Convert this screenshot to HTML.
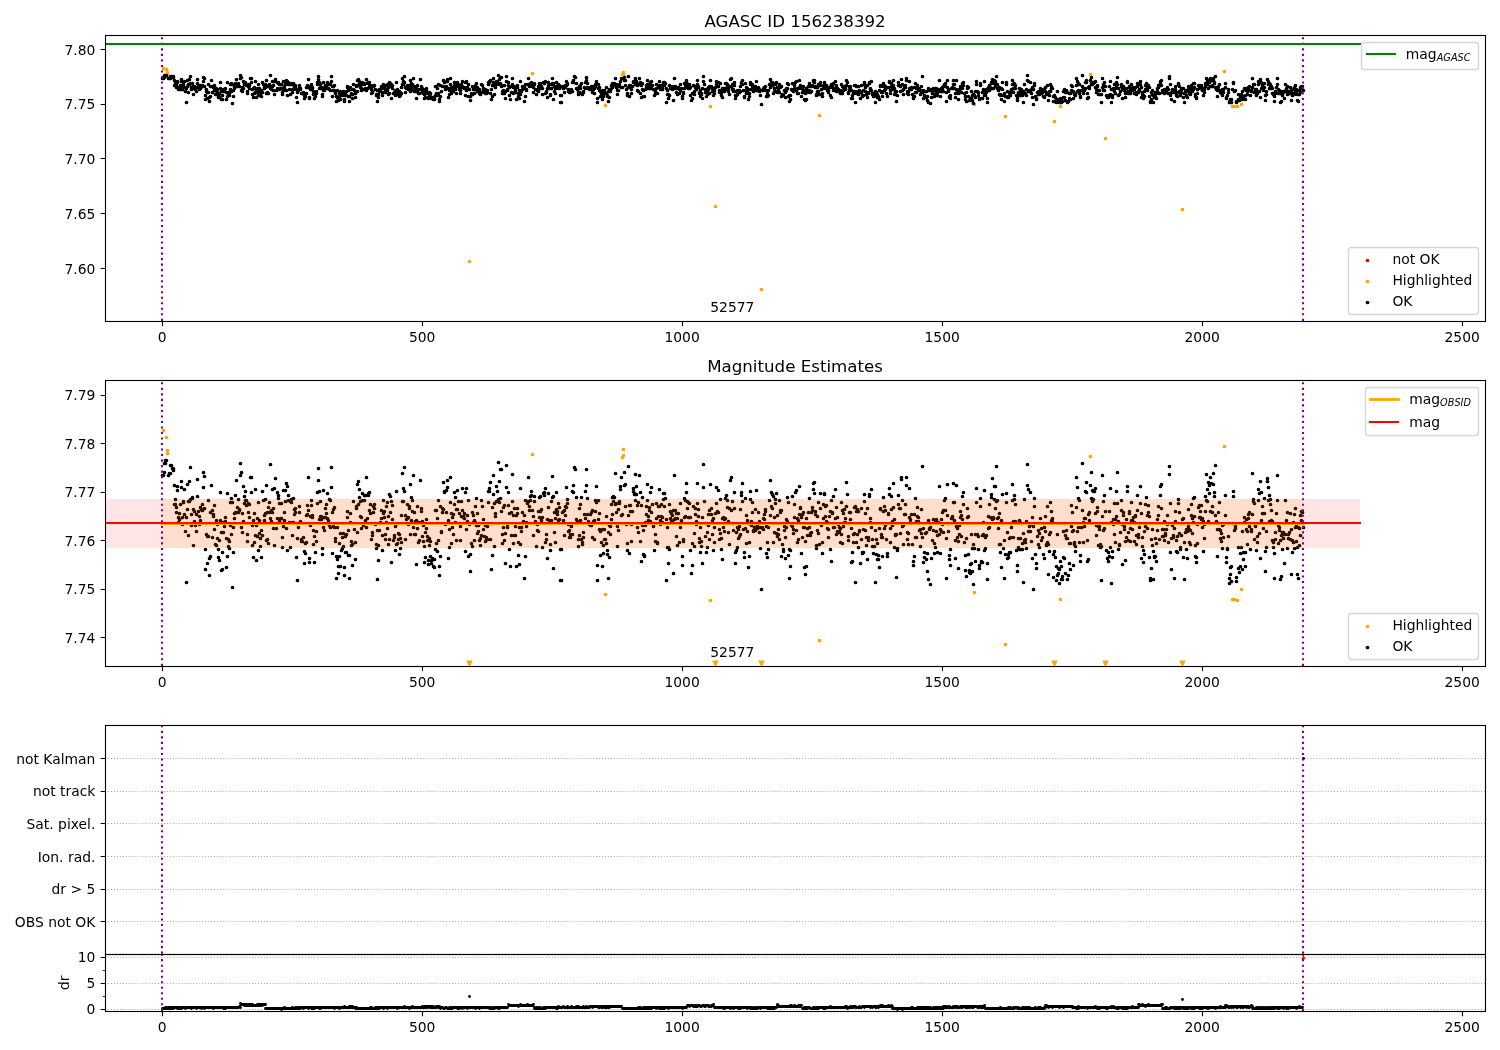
<!DOCTYPE html>
<html><head><meta charset="utf-8"><title>AGASC ID 156238392</title>
<style>
html,body{margin:0;padding:0;background:#fff}
svg{display:block;will-change:transform}
text{font-family:"DejaVu Sans","Liberation Sans",sans-serif;fill:#000}
.t10{font-size:13.89px}
.t12{font-size:16.67px}
.sub{font-size:9.72px;font-style:oblique}
</style></head><body>
<svg width="1500" height="1050" viewBox="0 0 1500 1050">
<rect width="1500" height="1050" fill="#fff"/>
<clipPath id="c1"><rect x="105.1" y="35.33" width="1379.9" height="285.95"/></clipPath>
<g clip-path="url(#c1)">
<path d="M163.5 68.5h0M166.5 69.5h0M167.5 72.5h0M167.5 73.5h0M469.5 261.5h0M532.5 73.5h0M605.5 105.5h0M622.5 74.5h0M623.5 72.5h0M623.5 74.5h0M710.5 106.5h0M715.5 206.5h0M761.5 289.5h0M819.5 115.5h0M974.5 104.5h0M1005.5 116.5h0M1054.5 121.5h0M1060.5 106.5h0M1090.5 74.5h0M1105.5 138.5h0M1182.5 209.5h0M1224.5 71.5h0M1232.5 106.5h0M1234.5 106.5h0M1237.5 106.5h0M1241.5 104.5h0" fill="none" stroke="#ffa500" stroke-width="3.7" stroke-linecap="round"/>
<path d="M162.5 78.5h0M163.5 78.5h0M164.5 77.5h0M164.5 75.5h0M165.5 75.5h0M165.5 75.5h0M166.5 75.5h0M168.5 78.5h0M168.5 78.5h0M169.5 78.5h0M169.5 78.5h0M170.5 78.5h0M170.5 76.5h0M171.5 76.5h0M171.5 76.5h0M172.5 76.5h0M173.5 77.5h0M173.5 76.5h0M174.5 80.5h0M174.5 85.5h0M175.5 83.5h0M175.5 85.5h0M176.5 85.5h0M176.5 87.5h0M177.5 82.5h0M177.5 81.5h0M178.5 88.5h0M178.5 89.5h0M179.5 88.5h0M179.5 87.5h0M180.5 89.5h0M180.5 85.5h0M181.5 79.5h0M181.5 81.5h0M182.5 87.5h0M182.5 89.5h0M183.5 84.5h0M183.5 84.5h0M184.5 81.5h0M184.5 87.5h0M185.5 91.5h0M186.5 88.5h0M186.5 102.5h0M187.5 80.5h0M187.5 86.5h0M188.5 92.5h0M188.5 84.5h0M189.5 79.5h0M189.5 84.5h0M190.5 76.5h0M190.5 83.5h0M191.5 89.5h0M191.5 87.5h0M192.5 83.5h0M192.5 83.5h0M193.5 86.5h0M193.5 94.5h0M194.5 88.5h0M194.5 86.5h0M195.5 89.5h0M195.5 89.5h0M196.5 87.5h0M196.5 91.5h0M197.5 83.5h0M197.5 79.5h0M198.5 86.5h0M199.5 87.5h0M199.5 89.5h0M200.5 85.5h0M200.5 88.5h0M201.5 86.5h0M201.5 86.5h0M202.5 85.5h0M202.5 86.5h0M203.5 81.5h0M203.5 77.5h0M204.5 78.5h0M204.5 86.5h0M205.5 99.5h0M205.5 95.5h0M206.5 91.5h0M206.5 89.5h0M207.5 98.5h0M207.5 92.5h0M208.5 84.5h0M208.5 92.5h0M209.5 101.5h0M209.5 97.5h0M210.5 96.5h0M210.5 86.5h0M211.5 80.5h0M212.5 86.5h0M212.5 92.5h0M213.5 87.5h0M213.5 87.5h0M214.5 85.5h0M214.5 90.5h0M215.5 94.5h0M215.5 94.5h0M216.5 94.5h0M216.5 88.5h0M217.5 89.5h0M217.5 92.5h0M218.5 97.5h0M218.5 95.5h0M219.5 97.5h0M219.5 93.5h0M220.5 88.5h0M220.5 82.5h0M221.5 91.5h0M221.5 99.5h0M222.5 99.5h0M222.5 95.5h0M223.5 91.5h0M223.5 89.5h0M224.5 90.5h0M225.5 88.5h0M225.5 88.5h0M226.5 92.5h0M226.5 99.5h0M227.5 96.5h0M227.5 82.5h0M228.5 94.5h0M228.5 92.5h0M229.5 93.5h0M229.5 95.5h0M230.5 84.5h0M230.5 89.5h0M231.5 91.5h0M231.5 83.5h0M232.5 103.5h0M232.5 84.5h0M233.5 96.5h0M233.5 90.5h0M234.5 87.5h0M234.5 88.5h0M235.5 86.5h0M235.5 83.5h0M236.5 79.5h0M236.5 86.5h0M237.5 85.5h0M238.5 83.5h0M238.5 86.5h0M239.5 86.5h0M239.5 86.5h0M240.5 78.5h0M240.5 75.5h0M241.5 77.5h0M241.5 90.5h0M242.5 87.5h0M242.5 91.5h0M243.5 81.5h0M243.5 88.5h0M244.5 84.5h0M244.5 83.5h0M245.5 84.5h0M245.5 82.5h0M246.5 85.5h0M246.5 84.5h0M247.5 91.5h0M247.5 93.5h0M248.5 86.5h0M248.5 84.5h0M249.5 85.5h0M249.5 88.5h0M250.5 78.5h0M251.5 78.5h0M251.5 82.5h0M252.5 89.5h0M252.5 94.5h0M253.5 97.5h0M253.5 88.5h0M254.5 93.5h0M254.5 87.5h0M255.5 92.5h0M255.5 81.5h0M256.5 89.5h0M256.5 97.5h0M257.5 92.5h0M257.5 88.5h0M258.5 84.5h0M258.5 95.5h0M259.5 91.5h0M259.5 88.5h0M260.5 94.5h0M260.5 92.5h0M261.5 96.5h0M261.5 90.5h0M262.5 92.5h0M262.5 82.5h0M263.5 84.5h0M264.5 88.5h0M264.5 87.5h0M265.5 84.5h0M265.5 87.5h0M266.5 80.5h0M266.5 93.5h0M267.5 92.5h0M267.5 86.5h0M268.5 85.5h0M268.5 93.5h0M269.5 86.5h0M269.5 84.5h0M270.5 75.5h0M270.5 88.5h0M271.5 86.5h0M271.5 89.5h0M272.5 81.5h0M272.5 86.5h0M273.5 85.5h0M273.5 90.5h0M274.5 94.5h0M274.5 81.5h0M275.5 79.5h0M275.5 79.5h0M276.5 90.5h0M277.5 88.5h0M277.5 82.5h0M278.5 82.5h0M278.5 83.5h0M279.5 84.5h0M279.5 89.5h0M280.5 88.5h0M280.5 88.5h0M281.5 84.5h0M281.5 88.5h0M282.5 92.5h0M282.5 94.5h0M283.5 90.5h0M283.5 81.5h0M284.5 88.5h0M284.5 86.5h0M285.5 84.5h0M285.5 81.5h0M286.5 90.5h0M286.5 80.5h0M287.5 81.5h0M287.5 95.5h0M288.5 84.5h0M288.5 82.5h0M289.5 89.5h0M290.5 94.5h0M290.5 84.5h0M291.5 83.5h0M291.5 84.5h0M292.5 89.5h0M292.5 92.5h0M293.5 83.5h0M293.5 89.5h0M294.5 86.5h0M294.5 87.5h0M295.5 86.5h0M295.5 85.5h0M296.5 89.5h0M296.5 97.5h0M297.5 92.5h0M297.5 102.5h0M298.5 90.5h0M298.5 90.5h0M299.5 87.5h0M299.5 85.5h0M300.5 88.5h0M300.5 89.5h0M301.5 93.5h0M301.5 93.5h0M302.5 93.5h0M303.5 92.5h0M303.5 92.5h0M304.5 98.5h0M304.5 95.5h0M305.5 96.5h0M305.5 93.5h0M306.5 93.5h0M306.5 87.5h0M307.5 87.5h0M307.5 85.5h0M308.5 79.5h0M308.5 86.5h0M309.5 97.5h0M309.5 98.5h0M310.5 89.5h0M310.5 87.5h0M311.5 85.5h0M311.5 84.5h0M312.5 88.5h0M312.5 87.5h0M313.5 91.5h0M313.5 94.5h0M314.5 98.5h0M314.5 92.5h0M315.5 96.5h0M316.5 93.5h0M316.5 91.5h0M317.5 84.5h0M317.5 82.5h0M318.5 79.5h0M318.5 76.5h0M319.5 88.5h0M319.5 82.5h0M320.5 87.5h0M320.5 84.5h0M321.5 88.5h0M321.5 87.5h0M322.5 96.5h0M322.5 94.5h0M323.5 82.5h0M323.5 90.5h0M324.5 90.5h0M324.5 87.5h0M325.5 88.5h0M325.5 85.5h0M326.5 87.5h0M326.5 85.5h0M327.5 82.5h0M327.5 88.5h0M328.5 88.5h0M329.5 84.5h0M329.5 89.5h0M330.5 90.5h0M330.5 84.5h0M331.5 76.5h0M331.5 81.5h0M332.5 96.5h0M332.5 86.5h0M333.5 86.5h0M333.5 90.5h0M334.5 85.5h0M334.5 90.5h0M335.5 92.5h0M335.5 93.5h0M336.5 101.5h0M336.5 96.5h0M337.5 90.5h0M337.5 97.5h0M338.5 100.5h0M338.5 99.5h0M339.5 93.5h0M339.5 96.5h0M340.5 91.5h0M340.5 99.5h0M341.5 95.5h0M342.5 95.5h0M342.5 92.5h0M343.5 94.5h0M343.5 91.5h0M344.5 99.5h0M344.5 101.5h0M345.5 95.5h0M345.5 92.5h0M346.5 91.5h0M346.5 95.5h0M347.5 87.5h0M347.5 86.5h0M348.5 90.5h0M348.5 96.5h0M349.5 101.5h0M349.5 96.5h0M350.5 89.5h0M350.5 87.5h0M351.5 93.5h0M351.5 94.5h0M352.5 94.5h0M352.5 98.5h0M353.5 84.5h0M353.5 89.5h0M354.5 90.5h0M355.5 97.5h0M355.5 93.5h0M356.5 85.5h0M356.5 86.5h0M357.5 91.5h0M357.5 80.5h0M358.5 79.5h0M358.5 85.5h0M359.5 81.5h0M359.5 83.5h0M360.5 84.5h0M360.5 87.5h0M361.5 90.5h0M361.5 88.5h0M362.5 82.5h0M362.5 84.5h0M363.5 89.5h0M363.5 89.5h0M364.5 83.5h0M364.5 84.5h0M365.5 88.5h0M365.5 83.5h0M366.5 79.5h0M366.5 90.5h0M367.5 88.5h0M368.5 82.5h0M368.5 83.5h0M369.5 82.5h0M369.5 86.5h0M370.5 85.5h0M370.5 87.5h0M371.5 89.5h0M371.5 93.5h0M372.5 91.5h0M372.5 92.5h0M373.5 85.5h0M373.5 86.5h0M374.5 85.5h0M374.5 85.5h0M375.5 89.5h0M375.5 89.5h0M376.5 95.5h0M376.5 94.5h0M377.5 101.5h0M377.5 90.5h0M378.5 94.5h0M378.5 97.5h0M379.5 91.5h0M379.5 89.5h0M380.5 89.5h0M381.5 86.5h0M381.5 88.5h0M382.5 92.5h0M382.5 95.5h0M383.5 87.5h0M383.5 84.5h0M384.5 86.5h0M384.5 88.5h0M385.5 91.5h0M385.5 92.5h0M386.5 85.5h0M386.5 89.5h0M387.5 84.5h0M387.5 90.5h0M388.5 94.5h0M388.5 87.5h0M389.5 93.5h0M389.5 82.5h0M390.5 83.5h0M390.5 86.5h0M391.5 84.5h0M391.5 98.5h0M392.5 88.5h0M392.5 85.5h0M393.5 93.5h0M394.5 92.5h0M394.5 92.5h0M395.5 90.5h0M395.5 95.5h0M396.5 94.5h0M396.5 82.5h0M397.5 89.5h0M397.5 93.5h0M398.5 93.5h0M398.5 91.5h0M399.5 91.5h0M399.5 96.5h0M400.5 95.5h0M400.5 92.5h0M401.5 93.5h0M401.5 87.5h0M402.5 84.5h0M402.5 78.5h0M403.5 81.5h0M403.5 84.5h0M404.5 76.5h0M404.5 82.5h0M405.5 87.5h0M405.5 92.5h0M406.5 88.5h0M407.5 88.5h0M407.5 85.5h0M408.5 88.5h0M408.5 89.5h0M409.5 85.5h0M409.5 85.5h0M410.5 80.5h0M410.5 91.5h0M411.5 83.5h0M411.5 88.5h0M412.5 86.5h0M412.5 84.5h0M413.5 90.5h0M413.5 78.5h0M414.5 86.5h0M414.5 91.5h0M415.5 91.5h0M415.5 88.5h0M416.5 98.5h0M416.5 88.5h0M417.5 90.5h0M417.5 85.5h0M418.5 89.5h0M418.5 93.5h0M419.5 93.5h0M420.5 89.5h0M420.5 79.5h0M421.5 86.5h0M421.5 86.5h0M422.5 88.5h0M422.5 92.5h0M423.5 93.5h0M423.5 89.5h0M424.5 94.5h0M424.5 98.5h0M425.5 97.5h0M425.5 91.5h0M426.5 88.5h0M426.5 90.5h0M427.5 92.5h0M427.5 93.5h0M428.5 98.5h0M428.5 97.5h0M429.5 94.5h0M429.5 92.5h0M430.5 93.5h0M430.5 96.5h0M431.5 97.5h0M431.5 98.5h0M432.5 97.5h0M433.5 97.5h0M433.5 99.5h0M434.5 97.5h0M434.5 99.5h0M435.5 95.5h0M435.5 86.5h0M436.5 86.5h0M436.5 93.5h0M437.5 95.5h0M437.5 88.5h0M438.5 84.5h0M438.5 93.5h0M439.5 99.5h0M439.5 101.5h0M440.5 96.5h0M440.5 85.5h0M441.5 91.5h0M441.5 91.5h0M442.5 86.5h0M442.5 86.5h0M443.5 86.5h0M443.5 80.5h0M444.5 82.5h0M444.5 82.5h0M445.5 89.5h0M446.5 86.5h0M446.5 81.5h0M447.5 81.5h0M447.5 79.5h0M448.5 88.5h0M448.5 97.5h0M449.5 94.5h0M449.5 90.5h0M450.5 78.5h0M450.5 84.5h0M451.5 87.5h0M451.5 93.5h0M452.5 87.5h0M452.5 90.5h0M453.5 87.5h0M453.5 91.5h0M454.5 82.5h0M454.5 85.5h0M455.5 83.5h0M455.5 89.5h0M456.5 86.5h0M456.5 93.5h0M457.5 82.5h0M457.5 86.5h0M458.5 84.5h0M459.5 89.5h0M459.5 87.5h0M460.5 93.5h0M460.5 90.5h0M461.5 87.5h0M461.5 84.5h0M462.5 81.5h0M462.5 86.5h0M463.5 87.5h0M463.5 87.5h0M464.5 87.5h0M464.5 88.5h0M465.5 95.5h0M465.5 82.5h0M466.5 81.5h0M466.5 90.5h0M467.5 87.5h0M467.5 88.5h0M468.5 84.5h0M468.5 96.5h0M469.5 89.5h0M470.5 100.5h0M470.5 96.5h0M471.5 93.5h0M472.5 94.5h0M472.5 86.5h0M473.5 87.5h0M473.5 89.5h0M474.5 88.5h0M474.5 93.5h0M475.5 89.5h0M475.5 85.5h0M476.5 83.5h0M476.5 89.5h0M477.5 91.5h0M477.5 87.5h0M478.5 91.5h0M478.5 89.5h0M479.5 89.5h0M479.5 93.5h0M480.5 92.5h0M480.5 94.5h0M481.5 92.5h0M481.5 84.5h0M482.5 85.5h0M482.5 85.5h0M483.5 88.5h0M483.5 90.5h0M484.5 92.5h0M485.5 93.5h0M485.5 89.5h0M486.5 93.5h0M486.5 92.5h0M487.5 90.5h0M487.5 92.5h0M488.5 84.5h0M488.5 82.5h0M489.5 81.5h0M489.5 82.5h0M490.5 80.5h0M490.5 93.5h0M491.5 89.5h0M491.5 99.5h0M492.5 96.5h0M492.5 85.5h0M493.5 82.5h0M493.5 78.5h0M494.5 84.5h0M494.5 94.5h0M495.5 87.5h0M495.5 87.5h0M496.5 84.5h0M496.5 81.5h0M497.5 82.5h0M498.5 75.5h0M498.5 83.5h0M499.5 79.5h0M499.5 84.5h0M500.5 83.5h0M500.5 77.5h0M501.5 77.5h0M501.5 86.5h0M502.5 91.5h0M502.5 93.5h0M503.5 90.5h0M503.5 85.5h0M504.5 85.5h0M504.5 93.5h0M505.5 98.5h0M505.5 91.5h0M506.5 76.5h0M506.5 81.5h0M507.5 89.5h0M507.5 90.5h0M508.5 82.5h0M508.5 85.5h0M509.5 87.5h0M509.5 95.5h0M510.5 99.5h0M511.5 92.5h0M511.5 86.5h0M512.5 84.5h0M512.5 78.5h0M513.5 87.5h0M513.5 93.5h0M514.5 92.5h0M514.5 86.5h0M515.5 92.5h0M515.5 90.5h0M516.5 99.5h0M516.5 87.5h0M517.5 85.5h0M517.5 87.5h0M518.5 96.5h0M518.5 93.5h0M519.5 98.5h0M519.5 90.5h0M520.5 81.5h0M520.5 94.5h0M521.5 91.5h0M521.5 90.5h0M522.5 86.5h0M522.5 89.5h0M523.5 88.5h0M524.5 87.5h0M524.5 101.5h0M525.5 84.5h0M525.5 96.5h0M526.5 90.5h0M526.5 89.5h0M527.5 84.5h0M527.5 84.5h0M528.5 78.5h0M528.5 84.5h0M529.5 86.5h0M529.5 85.5h0M530.5 83.5h0M530.5 84.5h0M531.5 82.5h0M531.5 83.5h0M532.5 86.5h0M533.5 92.5h0M533.5 87.5h0M534.5 84.5h0M534.5 83.5h0M535.5 89.5h0M535.5 89.5h0M536.5 94.5h0M537.5 90.5h0M537.5 89.5h0M538.5 91.5h0M538.5 86.5h0M539.5 88.5h0M539.5 83.5h0M540.5 83.5h0M540.5 86.5h0M541.5 86.5h0M541.5 88.5h0M542.5 88.5h0M542.5 94.5h0M543.5 82.5h0M543.5 82.5h0M544.5 83.5h0M544.5 82.5h0M545.5 81.5h0M545.5 93.5h0M546.5 91.5h0M546.5 92.5h0M547.5 97.5h0M547.5 88.5h0M548.5 82.5h0M548.5 85.5h0M549.5 88.5h0M550.5 95.5h0M550.5 94.5h0M551.5 88.5h0M551.5 84.5h0M552.5 78.5h0M552.5 83.5h0M553.5 83.5h0M553.5 99.5h0M554.5 91.5h0M554.5 86.5h0M555.5 88.5h0M555.5 93.5h0M556.5 86.5h0M556.5 82.5h0M557.5 86.5h0M557.5 87.5h0M558.5 84.5h0M558.5 88.5h0M559.5 85.5h0M559.5 88.5h0M560.5 95.5h0M560.5 102.5h0M561.5 102.5h0M561.5 95.5h0M562.5 86.5h0M563.5 86.5h0M563.5 88.5h0M564.5 92.5h0M564.5 86.5h0M565.5 85.5h0M565.5 87.5h0M566.5 85.5h0M566.5 81.5h0M567.5 83.5h0M567.5 84.5h0M568.5 91.5h0M568.5 89.5h0M569.5 92.5h0M569.5 90.5h0M570.5 92.5h0M570.5 91.5h0M571.5 89.5h0M571.5 90.5h0M572.5 91.5h0M572.5 82.5h0M573.5 82.5h0M573.5 80.5h0M574.5 76.5h0M574.5 76.5h0M575.5 77.5h0M576.5 83.5h0M576.5 88.5h0M577.5 88.5h0M577.5 89.5h0M578.5 94.5h0M578.5 92.5h0M579.5 92.5h0M579.5 86.5h0M580.5 88.5h0M580.5 85.5h0M581.5 83.5h0M581.5 93.5h0M582.5 94.5h0M582.5 93.5h0M583.5 92.5h0M583.5 91.5h0M584.5 87.5h0M584.5 87.5h0M585.5 88.5h0M585.5 82.5h0M586.5 80.5h0M586.5 77.5h0M587.5 83.5h0M587.5 87.5h0M588.5 88.5h0M589.5 89.5h0M589.5 89.5h0M590.5 89.5h0M590.5 87.5h0M591.5 89.5h0M591.5 86.5h0M592.5 86.5h0M592.5 92.5h0M593.5 89.5h0M593.5 88.5h0M594.5 88.5h0M594.5 93.5h0M595.5 86.5h0M595.5 84.5h0M596.5 81.5h0M596.5 84.5h0M597.5 102.5h0M597.5 98.5h0M598.5 88.5h0M598.5 84.5h0M599.5 90.5h0M599.5 87.5h0M600.5 91.5h0M600.5 96.5h0M601.5 93.5h0M602.5 90.5h0M602.5 99.5h0M603.5 94.5h0M603.5 96.5h0M604.5 93.5h0M604.5 90.5h0M605.5 93.5h0M606.5 93.5h0M606.5 87.5h0M607.5 95.5h0M607.5 96.5h0M608.5 101.5h0M608.5 91.5h0M609.5 89.5h0M609.5 97.5h0M610.5 91.5h0M610.5 90.5h0M611.5 85.5h0M611.5 88.5h0M612.5 87.5h0M612.5 83.5h0M613.5 84.5h0M613.5 83.5h0M614.5 83.5h0M615.5 85.5h0M615.5 78.5h0M616.5 84.5h0M616.5 87.5h0M617.5 90.5h0M617.5 94.5h0M618.5 86.5h0M618.5 90.5h0M619.5 84.5h0M619.5 84.5h0M620.5 81.5h0M620.5 81.5h0M621.5 87.5h0M621.5 78.5h0M622.5 87.5h0M624.5 77.5h0M624.5 80.5h0M625.5 85.5h0M625.5 80.5h0M626.5 89.5h0M627.5 95.5h0M627.5 93.5h0M628.5 87.5h0M628.5 76.5h0M629.5 85.5h0M629.5 96.5h0M630.5 86.5h0M630.5 85.5h0M631.5 93.5h0M631.5 89.5h0M632.5 86.5h0M632.5 86.5h0M633.5 82.5h0M633.5 81.5h0M634.5 82.5h0M634.5 82.5h0M635.5 84.5h0M635.5 78.5h0M636.5 82.5h0M636.5 81.5h0M637.5 90.5h0M637.5 85.5h0M638.5 91.5h0M638.5 84.5h0M639.5 78.5h0M640.5 82.5h0M640.5 93.5h0M641.5 97.5h0M641.5 85.5h0M642.5 83.5h0M642.5 89.5h0M643.5 90.5h0M643.5 96.5h0M644.5 96.5h0M644.5 96.5h0M645.5 89.5h0M645.5 89.5h0M646.5 85.5h0M646.5 87.5h0M647.5 84.5h0M647.5 80.5h0M648.5 87.5h0M648.5 88.5h0M649.5 86.5h0M649.5 85.5h0M650.5 82.5h0M650.5 88.5h0M651.5 81.5h0M651.5 86.5h0M652.5 85.5h0M653.5 89.5h0M653.5 89.5h0M654.5 95.5h0M654.5 89.5h0M655.5 91.5h0M655.5 93.5h0M656.5 84.5h0M656.5 88.5h0M657.5 93.5h0M657.5 93.5h0M658.5 87.5h0M658.5 85.5h0M659.5 81.5h0M659.5 85.5h0M660.5 88.5h0M660.5 89.5h0M661.5 85.5h0M661.5 87.5h0M662.5 88.5h0M662.5 89.5h0M663.5 82.5h0M663.5 84.5h0M664.5 85.5h0M664.5 82.5h0M665.5 83.5h0M666.5 88.5h0M666.5 102.5h0M667.5 94.5h0M667.5 90.5h0M668.5 94.5h0M668.5 98.5h0M669.5 95.5h0M669.5 85.5h0M670.5 86.5h0M670.5 88.5h0M671.5 88.5h0M671.5 87.5h0M672.5 89.5h0M672.5 87.5h0M673.5 100.5h0M673.5 86.5h0M674.5 78.5h0M674.5 88.5h0M675.5 86.5h0M675.5 88.5h0M676.5 87.5h0M676.5 92.5h0M677.5 88.5h0M677.5 94.5h0M678.5 87.5h0M679.5 89.5h0M679.5 93.5h0M680.5 90.5h0M680.5 84.5h0M681.5 88.5h0M681.5 88.5h0M682.5 96.5h0M682.5 98.5h0M683.5 93.5h0M683.5 92.5h0M684.5 83.5h0M684.5 88.5h0M685.5 84.5h0M685.5 87.5h0M686.5 82.5h0M686.5 80.5h0M687.5 84.5h0M687.5 85.5h0M688.5 88.5h0M688.5 84.5h0M689.5 88.5h0M689.5 84.5h0M690.5 87.5h0M690.5 95.5h0M691.5 100.5h0M692.5 93.5h0M692.5 98.5h0M693.5 85.5h0M693.5 85.5h0M694.5 91.5h0M694.5 94.5h0M695.5 86.5h0M695.5 87.5h0M696.5 88.5h0M696.5 89.5h0M697.5 84.5h0M697.5 80.5h0M698.5 87.5h0M698.5 86.5h0M699.5 93.5h0M699.5 92.5h0M700.5 96.5h0M700.5 90.5h0M701.5 93.5h0M701.5 94.5h0M702.5 98.5h0M702.5 88.5h0M703.5 81.5h0M703.5 76.5h0M704.5 84.5h0M705.5 92.5h0M705.5 89.5h0M706.5 89.5h0M706.5 96.5h0M707.5 94.5h0M707.5 91.5h0M708.5 87.5h0M708.5 89.5h0M709.5 93.5h0M709.5 86.5h0M710.5 80.5h0M711.5 86.5h0M711.5 87.5h0M712.5 88.5h0M712.5 91.5h0M713.5 95.5h0M713.5 88.5h0M714.5 93.5h0M714.5 90.5h0M715.5 87.5h0M716.5 84.5h0M716.5 81.5h0M717.5 86.5h0M718.5 82.5h0M718.5 86.5h0M719.5 90.5h0M719.5 92.5h0M720.5 91.5h0M720.5 83.5h0M721.5 92.5h0M721.5 95.5h0M722.5 97.5h0M722.5 88.5h0M723.5 88.5h0M723.5 90.5h0M724.5 91.5h0M724.5 88.5h0M725.5 88.5h0M725.5 83.5h0M726.5 89.5h0M726.5 83.5h0M727.5 85.5h0M727.5 84.5h0M728.5 91.5h0M728.5 88.5h0M729.5 94.5h0M729.5 86.5h0M730.5 79.5h0M731.5 78.5h0M731.5 86.5h0M732.5 84.5h0M732.5 89.5h0M733.5 91.5h0M733.5 89.5h0M734.5 82.5h0M734.5 85.5h0M735.5 95.5h0M735.5 98.5h0M736.5 95.5h0M736.5 91.5h0M737.5 90.5h0M737.5 94.5h0M738.5 90.5h0M738.5 92.5h0M739.5 90.5h0M739.5 92.5h0M740.5 91.5h0M740.5 86.5h0M741.5 82.5h0M741.5 83.5h0M742.5 80.5h0M742.5 84.5h0M743.5 90.5h0M744.5 97.5h0M744.5 96.5h0M745.5 90.5h0M745.5 83.5h0M746.5 87.5h0M746.5 93.5h0M747.5 91.5h0M747.5 88.5h0M748.5 89.5h0M748.5 99.5h0M749.5 96.5h0M749.5 93.5h0M750.5 82.5h0M750.5 84.5h0M751.5 89.5h0M751.5 89.5h0M752.5 86.5h0M752.5 84.5h0M753.5 91.5h0M753.5 90.5h0M754.5 90.5h0M754.5 89.5h0M755.5 90.5h0M755.5 86.5h0M756.5 81.5h0M757.5 90.5h0M757.5 89.5h0M758.5 90.5h0M758.5 87.5h0M759.5 89.5h0M759.5 91.5h0M760.5 95.5h0M760.5 90.5h0M761.5 104.5h0M762.5 90.5h0M762.5 90.5h0M763.5 90.5h0M763.5 88.5h0M764.5 87.5h0M764.5 88.5h0M765.5 86.5h0M765.5 86.5h0M766.5 90.5h0M766.5 96.5h0M767.5 96.5h0M767.5 93.5h0M768.5 95.5h0M768.5 90.5h0M769.5 84.5h0M770.5 87.5h0M770.5 79.5h0M771.5 82.5h0M771.5 85.5h0M772.5 82.5h0M772.5 85.5h0M773.5 83.5h0M773.5 93.5h0M774.5 88.5h0M774.5 91.5h0M775.5 84.5h0M775.5 83.5h0M776.5 82.5h0M776.5 91.5h0M777.5 87.5h0M777.5 92.5h0M778.5 90.5h0M778.5 91.5h0M779.5 92.5h0M779.5 84.5h0M780.5 87.5h0M780.5 86.5h0M781.5 86.5h0M781.5 96.5h0M782.5 94.5h0M783.5 95.5h0M783.5 95.5h0M784.5 90.5h0M784.5 90.5h0M785.5 92.5h0M785.5 97.5h0M786.5 90.5h0M786.5 88.5h0M787.5 83.5h0M787.5 88.5h0M788.5 96.5h0M788.5 84.5h0M789.5 101.5h0M789.5 95.5h0M790.5 99.5h0M790.5 95.5h0M791.5 89.5h0M791.5 89.5h0M792.5 90.5h0M792.5 83.5h0M793.5 90.5h0M793.5 91.5h0M794.5 88.5h0M794.5 85.5h0M795.5 82.5h0M796.5 81.5h0M796.5 90.5h0M797.5 88.5h0M797.5 93.5h0M798.5 88.5h0M798.5 93.5h0M799.5 87.5h0M799.5 80.5h0M800.5 86.5h0M800.5 85.5h0M801.5 88.5h0M801.5 96.5h0M802.5 92.5h0M802.5 87.5h0M803.5 86.5h0M803.5 90.5h0M804.5 90.5h0M804.5 99.5h0M805.5 93.5h0M805.5 100.5h0M806.5 99.5h0M806.5 88.5h0M807.5 92.5h0M807.5 90.5h0M808.5 86.5h0M809.5 83.5h0M809.5 90.5h0M810.5 91.5h0M810.5 92.5h0M811.5 86.5h0M811.5 91.5h0M812.5 86.5h0M812.5 85.5h0M813.5 81.5h0M813.5 80.5h0M814.5 80.5h0M814.5 82.5h0M815.5 86.5h0M815.5 87.5h0M816.5 95.5h0M816.5 94.5h0M817.5 91.5h0M817.5 87.5h0M818.5 91.5h0M818.5 84.5h0M819.5 94.5h0M820.5 82.5h0M820.5 85.5h0M821.5 89.5h0M822.5 93.5h0M822.5 96.5h0M823.5 88.5h0M823.5 85.5h0M824.5 82.5h0M824.5 82.5h0M825.5 87.5h0M825.5 85.5h0M826.5 85.5h0M826.5 88.5h0M827.5 90.5h0M827.5 89.5h0M828.5 92.5h0M828.5 90.5h0M829.5 87.5h0M829.5 87.5h0M830.5 86.5h0M830.5 95.5h0M831.5 97.5h0M831.5 84.5h0M832.5 86.5h0M832.5 87.5h0M833.5 90.5h0M833.5 83.5h0M834.5 90.5h0M835.5 88.5h0M835.5 81.5h0M836.5 85.5h0M836.5 91.5h0M837.5 91.5h0M837.5 88.5h0M838.5 89.5h0M838.5 91.5h0M839.5 90.5h0M839.5 91.5h0M840.5 93.5h0M840.5 90.5h0M841.5 84.5h0M841.5 91.5h0M842.5 86.5h0M842.5 93.5h0M843.5 87.5h0M843.5 90.5h0M844.5 89.5h0M844.5 86.5h0M845.5 88.5h0M845.5 89.5h0M846.5 85.5h0M846.5 80.5h0M847.5 82.5h0M848.5 92.5h0M848.5 93.5h0M849.5 86.5h0M849.5 89.5h0M850.5 86.5h0M850.5 88.5h0M851.5 90.5h0M851.5 98.5h0M852.5 98.5h0M852.5 95.5h0M853.5 91.5h0M853.5 93.5h0M854.5 85.5h0M854.5 91.5h0M855.5 102.5h0M855.5 85.5h0M856.5 86.5h0M856.5 93.5h0M857.5 86.5h0M857.5 91.5h0M858.5 94.5h0M858.5 86.5h0M859.5 90.5h0M859.5 91.5h0M860.5 98.5h0M861.5 85.5h0M861.5 92.5h0M862.5 95.5h0M862.5 96.5h0M863.5 95.5h0M863.5 90.5h0M864.5 84.5h0M864.5 82.5h0M865.5 87.5h0M865.5 91.5h0M866.5 94.5h0M866.5 92.5h0M867.5 97.5h0M867.5 85.5h0M868.5 92.5h0M868.5 93.5h0M869.5 82.5h0M869.5 83.5h0M870.5 89.5h0M870.5 88.5h0M871.5 81.5h0M871.5 90.5h0M872.5 94.5h0M872.5 93.5h0M873.5 96.5h0M874.5 94.5h0M874.5 94.5h0M875.5 102.5h0M875.5 91.5h0M876.5 92.5h0M876.5 96.5h0M877.5 97.5h0M877.5 94.5h0M878.5 97.5h0M878.5 96.5h0M879.5 99.5h0M879.5 90.5h0M880.5 86.5h0M880.5 85.5h0M881.5 91.5h0M881.5 92.5h0M882.5 96.5h0M882.5 92.5h0M883.5 86.5h0M883.5 83.5h0M884.5 85.5h0M884.5 90.5h0M885.5 86.5h0M885.5 89.5h0M886.5 93.5h0M887.5 96.5h0M887.5 96.5h0M888.5 87.5h0M888.5 87.5h0M889.5 82.5h0M889.5 81.5h0M890.5 93.5h0M890.5 90.5h0M891.5 86.5h0M891.5 83.5h0M892.5 88.5h0M892.5 89.5h0M893.5 85.5h0M893.5 80.5h0M894.5 88.5h0M894.5 94.5h0M895.5 92.5h0M895.5 91.5h0M896.5 101.5h0M896.5 91.5h0M897.5 95.5h0M897.5 95.5h0M898.5 82.5h0M898.5 85.5h0M899.5 85.5h0M900.5 86.5h0M900.5 91.5h0M901.5 79.5h0M901.5 79.5h0M902.5 84.5h0M902.5 90.5h0M903.5 89.5h0M903.5 94.5h0M904.5 87.5h0M904.5 87.5h0M905.5 87.5h0M905.5 85.5h0M906.5 78.5h0M906.5 80.5h0M907.5 91.5h0M907.5 93.5h0M908.5 91.5h0M908.5 94.5h0M909.5 88.5h0M909.5 81.5h0M910.5 88.5h0M910.5 89.5h0M911.5 87.5h0M911.5 89.5h0M912.5 94.5h0M913.5 97.5h0M913.5 98.5h0M914.5 96.5h0M914.5 87.5h0M915.5 83.5h0M915.5 92.5h0M916.5 88.5h0M916.5 92.5h0M917.5 85.5h0M917.5 87.5h0M918.5 88.5h0M918.5 89.5h0M919.5 90.5h0M919.5 89.5h0M920.5 90.5h0M920.5 94.5h0M921.5 91.5h0M921.5 86.5h0M922.5 92.5h0M922.5 76.5h0M923.5 90.5h0M923.5 98.5h0M924.5 95.5h0M924.5 96.5h0M925.5 91.5h0M926.5 97.5h0M926.5 91.5h0M927.5 100.5h0M927.5 96.5h0M928.5 88.5h0M928.5 102.5h0M929.5 90.5h0M929.5 90.5h0M930.5 90.5h0M930.5 103.5h0M931.5 97.5h0M931.5 89.5h0M932.5 93.5h0M932.5 93.5h0M933.5 90.5h0M933.5 88.5h0M934.5 94.5h0M934.5 96.5h0M935.5 94.5h0M935.5 88.5h0M936.5 91.5h0M936.5 88.5h0M937.5 92.5h0M937.5 95.5h0M938.5 89.5h0M939.5 91.5h0M939.5 80.5h0M940.5 90.5h0M940.5 96.5h0M941.5 91.5h0M941.5 88.5h0M942.5 87.5h0M942.5 89.5h0M943.5 91.5h0M943.5 86.5h0M944.5 84.5h0M944.5 84.5h0M945.5 83.5h0M945.5 86.5h0M946.5 92.5h0M946.5 101.5h0M947.5 87.5h0M947.5 80.5h0M948.5 89.5h0M948.5 91.5h0M949.5 97.5h0M949.5 96.5h0M950.5 95.5h0M950.5 98.5h0M951.5 88.5h0M952.5 88.5h0M952.5 87.5h0M953.5 84.5h0M953.5 80.5h0M954.5 88.5h0M954.5 84.5h0M955.5 93.5h0M955.5 97.5h0M956.5 89.5h0M956.5 80.5h0M957.5 90.5h0M957.5 92.5h0M958.5 93.5h0M958.5 99.5h0M959.5 89.5h0M959.5 91.5h0M960.5 88.5h0M960.5 86.5h0M961.5 87.5h0M961.5 92.5h0M962.5 88.5h0M962.5 83.5h0M963.5 82.5h0M963.5 85.5h0M964.5 93.5h0M965.5 96.5h0M965.5 99.5h0M966.5 101.5h0M966.5 92.5h0M967.5 88.5h0M967.5 86.5h0M968.5 87.5h0M968.5 96.5h0M969.5 100.5h0M969.5 100.5h0M970.5 98.5h0M970.5 100.5h0M971.5 98.5h0M971.5 91.5h0M972.5 100.5h0M972.5 95.5h0M973.5 103.5h0M973.5 94.5h0M974.5 95.5h0M975.5 97.5h0M975.5 91.5h0M976.5 84.5h0M976.5 81.5h0M977.5 91.5h0M978.5 92.5h0M978.5 95.5h0M979.5 99.5h0M979.5 98.5h0M980.5 83.5h0M980.5 85.5h0M981.5 98.5h0M981.5 98.5h0M982.5 92.5h0M982.5 98.5h0M983.5 91.5h0M983.5 89.5h0M984.5 81.5h0M984.5 95.5h0M985.5 95.5h0M985.5 92.5h0M986.5 92.5h0M986.5 89.5h0M987.5 102.5h0M987.5 98.5h0M988.5 87.5h0M988.5 90.5h0M989.5 85.5h0M989.5 90.5h0M990.5 87.5h0M991.5 82.5h0M991.5 83.5h0M992.5 79.5h0M992.5 88.5h0M993.5 88.5h0M993.5 88.5h0M994.5 80.5h0M994.5 83.5h0M995.5 86.5h0M995.5 81.5h0M996.5 76.5h0M996.5 84.5h0M997.5 84.5h0M997.5 88.5h0M998.5 88.5h0M998.5 90.5h0M999.5 94.5h0M999.5 87.5h0M1000.5 94.5h0M1000.5 95.5h0M1001.5 99.5h0M1001.5 88.5h0M1002.5 89.5h0M1002.5 82.5h0M1003.5 95.5h0M1004.5 93.5h0M1004.5 101.5h0M1005.5 96.5h0M1006.5 84.5h0M1006.5 82.5h0M1007.5 91.5h0M1007.5 97.5h0M1008.5 96.5h0M1008.5 97.5h0M1009.5 95.5h0M1009.5 92.5h0M1010.5 92.5h0M1010.5 95.5h0M1011.5 89.5h0M1011.5 90.5h0M1012.5 84.5h0M1012.5 80.5h0M1013.5 88.5h0M1013.5 92.5h0M1014.5 83.5h0M1014.5 83.5h0M1015.5 85.5h0M1015.5 88.5h0M1016.5 95.5h0M1017.5 100.5h0M1017.5 98.5h0M1018.5 94.5h0M1018.5 92.5h0M1019.5 88.5h0M1019.5 95.5h0M1020.5 92.5h0M1020.5 89.5h0M1021.5 95.5h0M1021.5 89.5h0M1022.5 93.5h0M1022.5 95.5h0M1023.5 102.5h0M1023.5 91.5h0M1024.5 84.5h0M1024.5 93.5h0M1025.5 93.5h0M1025.5 93.5h0M1026.5 95.5h0M1026.5 89.5h0M1027.5 80.5h0M1027.5 75.5h0M1028.5 81.5h0M1028.5 91.5h0M1029.5 90.5h0M1030.5 82.5h0M1030.5 91.5h0M1031.5 89.5h0M1031.5 93.5h0M1032.5 97.5h0M1032.5 87.5h0M1033.5 89.5h0M1033.5 104.5h0M1034.5 85.5h0M1034.5 83.5h0M1035.5 96.5h0M1035.5 96.5h0M1036.5 98.5h0M1036.5 99.5h0M1037.5 92.5h0M1037.5 92.5h0M1038.5 91.5h0M1038.5 94.5h0M1039.5 91.5h0M1039.5 94.5h0M1040.5 88.5h0M1040.5 88.5h0M1041.5 90.5h0M1041.5 93.5h0M1042.5 92.5h0M1043.5 96.5h0M1043.5 89.5h0M1044.5 90.5h0M1044.5 97.5h0M1045.5 91.5h0M1045.5 87.5h0M1046.5 94.5h0M1046.5 94.5h0M1047.5 85.5h0M1047.5 93.5h0M1048.5 100.5h0M1048.5 94.5h0M1049.5 91.5h0M1049.5 95.5h0M1050.5 91.5h0M1050.5 84.5h0M1051.5 88.5h0M1051.5 86.5h0M1052.5 88.5h0M1052.5 88.5h0M1053.5 96.5h0M1053.5 101.5h0M1054.5 95.5h0M1055.5 97.5h0M1056.5 102.5h0M1056.5 99.5h0M1057.5 91.5h0M1057.5 101.5h0M1058.5 100.5h0M1058.5 99.5h0M1059.5 99.5h0M1059.5 102.5h0M1060.5 98.5h0M1061.5 99.5h0M1061.5 102.5h0M1062.5 101.5h0M1062.5 101.5h0M1063.5 97.5h0M1063.5 91.5h0M1064.5 89.5h0M1064.5 97.5h0M1065.5 100.5h0M1065.5 92.5h0M1066.5 92.5h0M1066.5 90.5h0M1067.5 92.5h0M1067.5 102.5h0M1068.5 101.5h0M1069.5 93.5h0M1069.5 98.5h0M1070.5 99.5h0M1070.5 93.5h0M1071.5 85.5h0M1071.5 90.5h0M1072.5 86.5h0M1072.5 91.5h0M1073.5 91.5h0M1073.5 98.5h0M1074.5 93.5h0M1074.5 94.5h0M1075.5 95.5h0M1075.5 94.5h0M1076.5 85.5h0M1076.5 78.5h0M1077.5 81.5h0M1077.5 91.5h0M1078.5 90.5h0M1078.5 83.5h0M1079.5 84.5h0M1079.5 93.5h0M1080.5 96.5h0M1080.5 97.5h0M1081.5 90.5h0M1082.5 75.5h0M1082.5 86.5h0M1083.5 89.5h0M1083.5 93.5h0M1084.5 90.5h0M1084.5 88.5h0M1085.5 82.5h0M1085.5 88.5h0M1086.5 82.5h0M1086.5 80.5h0M1087.5 93.5h0M1087.5 98.5h0M1088.5 97.5h0M1088.5 87.5h0M1089.5 88.5h0M1089.5 86.5h0M1090.5 80.5h0M1091.5 83.5h0M1091.5 77.5h0M1092.5 82.5h0M1092.5 84.5h0M1093.5 83.5h0M1093.5 82.5h0M1094.5 82.5h0M1095.5 81.5h0M1095.5 87.5h0M1096.5 89.5h0M1096.5 92.5h0M1097.5 86.5h0M1097.5 85.5h0M1098.5 90.5h0M1098.5 94.5h0M1099.5 90.5h0M1099.5 90.5h0M1100.5 94.5h0M1100.5 94.5h0M1101.5 102.5h0M1101.5 94.5h0M1102.5 87.5h0M1102.5 78.5h0M1103.5 84.5h0M1103.5 90.5h0M1104.5 90.5h0M1104.5 82.5h0M1105.5 86.5h0M1106.5 95.5h0M1106.5 95.5h0M1107.5 97.5h0M1108.5 97.5h0M1108.5 95.5h0M1109.5 86.5h0M1109.5 96.5h0M1110.5 94.5h0M1110.5 81.5h0M1111.5 89.5h0M1111.5 102.5h0M1112.5 97.5h0M1112.5 95.5h0M1113.5 88.5h0M1113.5 89.5h0M1114.5 84.5h0M1114.5 91.5h0M1115.5 88.5h0M1115.5 93.5h0M1116.5 87.5h0M1116.5 82.5h0M1117.5 77.5h0M1117.5 84.5h0M1118.5 88.5h0M1118.5 95.5h0M1119.5 94.5h0M1119.5 94.5h0M1120.5 91.5h0M1121.5 84.5h0M1121.5 86.5h0M1122.5 89.5h0M1122.5 98.5h0M1123.5 86.5h0M1123.5 87.5h0M1124.5 90.5h0M1124.5 89.5h0M1125.5 97.5h0M1125.5 93.5h0M1126.5 92.5h0M1126.5 88.5h0M1127.5 81.5h0M1127.5 82.5h0M1128.5 93.5h0M1128.5 91.5h0M1129.5 86.5h0M1129.5 87.5h0M1130.5 93.5h0M1130.5 90.5h0M1131.5 88.5h0M1131.5 84.5h0M1132.5 88.5h0M1132.5 90.5h0M1133.5 87.5h0M1134.5 93.5h0M1134.5 89.5h0M1135.5 87.5h0M1135.5 87.5h0M1136.5 92.5h0M1136.5 94.5h0M1137.5 86.5h0M1137.5 83.5h0M1138.5 91.5h0M1138.5 92.5h0M1139.5 90.5h0M1139.5 89.5h0M1140.5 84.5h0M1140.5 81.5h0M1141.5 87.5h0M1141.5 97.5h0M1142.5 92.5h0M1142.5 94.5h0M1143.5 95.5h0M1143.5 98.5h0M1144.5 96.5h0M1144.5 91.5h0M1145.5 89.5h0M1145.5 85.5h0M1146.5 83.5h0M1147.5 87.5h0M1147.5 90.5h0M1148.5 85.5h0M1148.5 86.5h0M1149.5 87.5h0M1149.5 96.5h0M1150.5 102.5h0M1150.5 101.5h0M1151.5 99.5h0M1151.5 92.5h0M1152.5 90.5h0M1152.5 94.5h0M1153.5 102.5h0M1153.5 95.5h0M1154.5 96.5h0M1154.5 97.5h0M1155.5 96.5h0M1155.5 92.5h0M1156.5 98.5h0M1156.5 93.5h0M1157.5 91.5h0M1157.5 88.5h0M1158.5 85.5h0M1158.5 87.5h0M1159.5 93.5h0M1160.5 81.5h0M1160.5 83.5h0M1161.5 80.5h0M1161.5 85.5h0M1162.5 92.5h0M1162.5 90.5h0M1163.5 92.5h0M1163.5 90.5h0M1164.5 89.5h0M1164.5 93.5h0M1165.5 92.5h0M1165.5 91.5h0M1166.5 90.5h0M1166.5 89.5h0M1167.5 89.5h0M1167.5 87.5h0M1168.5 93.5h0M1168.5 89.5h0M1169.5 76.5h0M1169.5 78.5h0M1170.5 84.5h0M1170.5 95.5h0M1171.5 99.5h0M1171.5 92.5h0M1172.5 89.5h0M1173.5 92.5h0M1173.5 92.5h0M1174.5 90.5h0M1174.5 101.5h0M1175.5 89.5h0M1175.5 86.5h0M1176.5 93.5h0M1176.5 95.5h0M1177.5 92.5h0M1177.5 96.5h0M1178.5 83.5h0M1178.5 84.5h0M1179.5 91.5h0M1179.5 86.5h0M1180.5 94.5h0M1180.5 95.5h0M1181.5 89.5h0M1181.5 92.5h0M1182.5 88.5h0M1183.5 88.5h0M1183.5 97.5h0M1184.5 102.5h0M1184.5 93.5h0M1185.5 91.5h0M1186.5 95.5h0M1186.5 90.5h0M1187.5 97.5h0M1187.5 91.5h0M1188.5 86.5h0M1188.5 89.5h0M1189.5 93.5h0M1189.5 90.5h0M1190.5 94.5h0M1190.5 90.5h0M1191.5 87.5h0M1191.5 85.5h0M1192.5 88.5h0M1192.5 91.5h0M1193.5 89.5h0M1193.5 83.5h0M1194.5 83.5h0M1194.5 87.5h0M1195.5 94.5h0M1195.5 96.5h0M1196.5 97.5h0M1196.5 98.5h0M1197.5 89.5h0M1197.5 93.5h0M1198.5 85.5h0M1199.5 88.5h0M1199.5 85.5h0M1200.5 86.5h0M1200.5 88.5h0M1201.5 88.5h0M1201.5 85.5h0M1202.5 88.5h0M1202.5 90.5h0M1203.5 88.5h0M1203.5 95.5h0M1204.5 92.5h0M1204.5 89.5h0M1205.5 86.5h0M1205.5 83.5h0M1206.5 84.5h0M1206.5 78.5h0M1207.5 81.5h0M1207.5 84.5h0M1208.5 80.5h0M1208.5 88.5h0M1209.5 82.5h0M1209.5 80.5h0M1210.5 86.5h0M1210.5 78.5h0M1211.5 80.5h0M1212.5 86.5h0M1212.5 85.5h0M1213.5 80.5h0M1213.5 78.5h0M1214.5 83.5h0M1214.5 82.5h0M1215.5 76.5h0M1215.5 87.5h0M1216.5 89.5h0M1216.5 88.5h0M1217.5 96.5h0M1217.5 90.5h0M1218.5 86.5h0M1218.5 89.5h0M1219.5 90.5h0M1219.5 84.5h0M1220.5 91.5h0M1220.5 92.5h0M1221.5 93.5h0M1221.5 91.5h0M1222.5 89.5h0M1222.5 95.5h0M1223.5 89.5h0M1223.5 92.5h0M1225.5 83.5h0M1225.5 87.5h0M1226.5 97.5h0M1226.5 98.5h0M1227.5 95.5h0M1227.5 95.5h0M1228.5 89.5h0M1228.5 92.5h0M1229.5 101.5h0M1229.5 102.5h0M1230.5 99.5h0M1230.5 100.5h0M1231.5 102.5h0M1231.5 99.5h0M1232.5 89.5h0M1233.5 82.5h0M1233.5 83.5h0M1234.5 91.5h0M1235.5 90.5h0M1235.5 90.5h0M1236.5 102.5h0M1236.5 101.5h0M1238.5 94.5h0M1238.5 99.5h0M1239.5 100.5h0M1239.5 100.5h0M1240.5 99.5h0M1240.5 96.5h0M1241.5 94.5h0M1242.5 99.5h0M1242.5 91.5h0M1243.5 96.5h0M1243.5 97.5h0M1244.5 88.5h0M1244.5 89.5h0M1245.5 95.5h0M1245.5 99.5h0M1246.5 90.5h0M1246.5 88.5h0M1247.5 91.5h0M1247.5 94.5h0M1248.5 88.5h0M1248.5 87.5h0M1249.5 86.5h0M1249.5 90.5h0M1250.5 95.5h0M1251.5 90.5h0M1251.5 91.5h0M1252.5 87.5h0M1252.5 78.5h0M1253.5 84.5h0M1253.5 84.5h0M1254.5 84.5h0M1254.5 92.5h0M1255.5 90.5h0M1255.5 89.5h0M1256.5 95.5h0M1256.5 89.5h0M1257.5 92.5h0M1257.5 93.5h0M1258.5 84.5h0M1258.5 81.5h0M1259.5 82.5h0M1259.5 91.5h0M1260.5 97.5h0M1260.5 79.5h0M1261.5 82.5h0M1261.5 88.5h0M1262.5 85.5h0M1262.5 87.5h0M1263.5 90.5h0M1264.5 83.5h0M1264.5 87.5h0M1265.5 95.5h0M1265.5 100.5h0M1266.5 94.5h0M1266.5 91.5h0M1267.5 79.5h0M1267.5 79.5h0M1268.5 81.5h0M1268.5 84.5h0M1269.5 88.5h0M1269.5 83.5h0M1270.5 84.5h0M1270.5 85.5h0M1271.5 86.5h0M1271.5 88.5h0M1272.5 88.5h0M1272.5 93.5h0M1273.5 94.5h0M1273.5 93.5h0M1274.5 101.5h0M1274.5 96.5h0M1275.5 93.5h0M1275.5 91.5h0M1276.5 87.5h0M1277.5 84.5h0M1277.5 78.5h0M1278.5 89.5h0M1278.5 93.5h0M1279.5 90.5h0M1279.5 90.5h0M1280.5 93.5h0M1280.5 102.5h0M1281.5 92.5h0M1281.5 101.5h0M1282.5 95.5h0M1282.5 91.5h0M1283.5 91.5h0M1283.5 92.5h0M1284.5 98.5h0M1284.5 91.5h0M1285.5 91.5h0M1285.5 84.5h0M1286.5 88.5h0M1286.5 89.5h0M1287.5 94.5h0M1287.5 86.5h0M1288.5 91.5h0M1288.5 92.5h0M1289.5 91.5h0M1290.5 93.5h0M1290.5 87.5h0M1291.5 90.5h0M1291.5 100.5h0M1292.5 95.5h0M1292.5 93.5h0M1293.5 93.5h0M1293.5 89.5h0M1294.5 87.5h0M1294.5 94.5h0M1295.5 90.5h0M1295.5 85.5h0M1296.5 89.5h0M1296.5 93.5h0M1297.5 94.5h0M1297.5 100.5h0M1298.5 101.5h0M1298.5 90.5h0M1299.5 90.5h0M1299.5 94.5h0M1300.5 92.5h0M1300.5 87.5h0M1301.5 88.5h0M1301.5 86.5h0M1302.5 86.5h0M1303.5 90.5h0" fill="none" stroke="#000" stroke-width="3.7" stroke-linecap="round"/>
<path d="M162 320.88V35.33" stroke="#800080" stroke-width="2.08" stroke-dasharray="2.08 3.44" fill="none"/>
<path d="M1303 320.88V35.33" stroke="#800080" stroke-width="2.08" stroke-dasharray="2.08 3.44" fill="none"/>
<path d="M103.96 44H1361.04" stroke="#008000" stroke-width="2.08" fill="none"/>
</g>
<rect x="105.5" y="35.5" width="1380" height="286" fill="none" stroke="#000" stroke-width="1.11" stroke-linejoin="miter"/>
<path d="M162.5 321.5v4.86M422.5 321.5v4.86M682.5 321.5v4.86M942.5 321.5v4.86M1202.5 321.5v4.86M1462.5 321.5v4.86M105.5 268.5h-4.86M105.5 213.5h-4.86M105.5 158.5h-4.86M105.5 104.5h-4.86M105.5 49.5h-4.86" stroke="#000" stroke-width="1.11" fill="none"/>
<clipPath id="c2"><rect x="105.1" y="380.33" width="1379.9" height="285.95"/></clipPath>
<g clip-path="url(#c2)">
<path d="M163.5 430.5h0M166.5 437.5h0M167.5 450.5h0M167.5 453.5h0M532.5 454.5h0M605.5 594.5h0M622.5 457.5h0M623.5 449.5h0M623.5 455.5h0M710.5 600.5h0M819.5 640.5h0M974.5 592.5h0M1005.5 644.5h0M1060.5 599.5h0M1090.5 456.5h0M1224.5 446.5h0M1232.5 599.5h0M1234.5 599.5h0M1237.5 600.5h0M1241.5 589.5h0" fill="none" stroke="#ffa500" stroke-width="3.7" stroke-linecap="round"/>
<path d="M469.5 665.7 L467.3 661.3 L471.7 661.3 Z" fill="#ffa500" stroke="#ffa500" stroke-width="1.39" stroke-linejoin="miter"/>
<path d="M715.5 665.7 L713.3 661.3 L717.7 661.3 Z" fill="#ffa500" stroke="#ffa500" stroke-width="1.39" stroke-linejoin="miter"/>
<path d="M761.5 665.7 L759.3 661.3 L763.7 661.3 Z" fill="#ffa500" stroke="#ffa500" stroke-width="1.39" stroke-linejoin="miter"/>
<path d="M1054.5 665.7 L1052.3 661.3 L1056.7 661.3 Z" fill="#ffa500" stroke="#ffa500" stroke-width="1.39" stroke-linejoin="miter"/>
<path d="M1105.5 665.7 L1103.3 661.3 L1107.7 661.3 Z" fill="#ffa500" stroke="#ffa500" stroke-width="1.39" stroke-linejoin="miter"/>
<path d="M1182.5 665.7 L1180.3 661.3 L1184.7 661.3 Z" fill="#ffa500" stroke="#ffa500" stroke-width="1.39" stroke-linejoin="miter"/>
<path d="M162.5 475.5h0M163.5 475.5h0M164.5 472.5h0M164.5 463.5h0M165.5 463.5h0M165.5 460.5h0M166.5 460.5h0M168.5 475.5h0M168.5 475.5h0M169.5 473.5h0M169.5 473.5h0M170.5 473.5h0M170.5 465.5h0M171.5 465.5h0M171.5 465.5h0M172.5 468.5h0M173.5 470.5h0M173.5 468.5h0M174.5 485.5h0M174.5 504.5h0M175.5 499.5h0M175.5 504.5h0M176.5 507.5h0M176.5 512.5h0M177.5 490.5h0M177.5 486.5h0M178.5 517.5h0M178.5 522.5h0M179.5 519.5h0M179.5 513.5h0M180.5 523.5h0M180.5 504.5h0M181.5 481.5h0M181.5 487.5h0M182.5 517.5h0M182.5 524.5h0M183.5 502.5h0M183.5 501.5h0M184.5 489.5h0M184.5 514.5h0M185.5 531.5h0M186.5 517.5h0M186.5 582.5h0M187.5 484.5h0M187.5 509.5h0M188.5 535.5h0M188.5 501.5h0M189.5 481.5h0M189.5 501.5h0M190.5 467.5h0M190.5 499.5h0M191.5 525.5h0M191.5 514.5h0M192.5 498.5h0M192.5 497.5h0M193.5 509.5h0M193.5 545.5h0M194.5 521.5h0M194.5 511.5h0M195.5 525.5h0M195.5 524.5h0M196.5 514.5h0M196.5 531.5h0M197.5 496.5h0M197.5 479.5h0M198.5 511.5h0M199.5 516.5h0M199.5 524.5h0M200.5 507.5h0M200.5 520.5h0M201.5 509.5h0M201.5 509.5h0M202.5 504.5h0M202.5 510.5h0M203.5 487.5h0M203.5 472.5h0M204.5 476.5h0M204.5 508.5h0M205.5 569.5h0M205.5 549.5h0M206.5 534.5h0M206.5 523.5h0M207.5 563.5h0M207.5 536.5h0M208.5 500.5h0M208.5 536.5h0M209.5 575.5h0M209.5 558.5h0M210.5 556.5h0M210.5 512.5h0M211.5 485.5h0M212.5 510.5h0M212.5 537.5h0M213.5 516.5h0M213.5 514.5h0M214.5 505.5h0M214.5 529.5h0M215.5 544.5h0M215.5 544.5h0M216.5 545.5h0M216.5 520.5h0M217.5 524.5h0M217.5 538.5h0M218.5 557.5h0M218.5 549.5h0M219.5 560.5h0M219.5 540.5h0M220.5 520.5h0M220.5 492.5h0M221.5 532.5h0M221.5 570.5h0M222.5 569.5h0M222.5 552.5h0M223.5 532.5h0M223.5 522.5h0M224.5 526.5h0M225.5 517.5h0M225.5 521.5h0M226.5 538.5h0M226.5 567.5h0M227.5 556.5h0M227.5 493.5h0M228.5 546.5h0M228.5 539.5h0M229.5 541.5h0M229.5 548.5h0M230.5 502.5h0M230.5 525.5h0M231.5 534.5h0M231.5 498.5h0M232.5 587.5h0M232.5 502.5h0M233.5 552.5h0M233.5 527.5h0M234.5 513.5h0M234.5 518.5h0M235.5 512.5h0M235.5 495.5h0M236.5 480.5h0M236.5 512.5h0M237.5 507.5h0M238.5 499.5h0M238.5 512.5h0M239.5 509.5h0M239.5 510.5h0M240.5 475.5h0M240.5 463.5h0M241.5 472.5h0M241.5 527.5h0M242.5 513.5h0M242.5 532.5h0M243.5 486.5h0M243.5 521.5h0M244.5 503.5h0M244.5 496.5h0M245.5 500.5h0M245.5 491.5h0M246.5 505.5h0M246.5 500.5h0M247.5 534.5h0M247.5 541.5h0M248.5 512.5h0M248.5 503.5h0M249.5 504.5h0M249.5 517.5h0M250.5 477.5h0M251.5 477.5h0M251.5 492.5h0M252.5 525.5h0M252.5 545.5h0M253.5 557.5h0M253.5 520.5h0M254.5 542.5h0M254.5 513.5h0M255.5 535.5h0M255.5 489.5h0M256.5 525.5h0M256.5 560.5h0M257.5 536.5h0M257.5 518.5h0M258.5 502.5h0M258.5 550.5h0M259.5 533.5h0M259.5 520.5h0M260.5 546.5h0M260.5 538.5h0M261.5 557.5h0M261.5 530.5h0M262.5 535.5h0M262.5 491.5h0M263.5 500.5h0M264.5 520.5h0M264.5 515.5h0M265.5 499.5h0M265.5 513.5h0M266.5 485.5h0M266.5 540.5h0M267.5 539.5h0M267.5 512.5h0M268.5 507.5h0M268.5 543.5h0M269.5 512.5h0M269.5 502.5h0M270.5 464.5h0M270.5 518.5h0M271.5 510.5h0M271.5 521.5h0M272.5 489.5h0M272.5 512.5h0M273.5 508.5h0M273.5 528.5h0M274.5 545.5h0M274.5 488.5h0M275.5 478.5h0M275.5 478.5h0M276.5 528.5h0M277.5 518.5h0M277.5 492.5h0M278.5 495.5h0M278.5 498.5h0M279.5 503.5h0M279.5 521.5h0M280.5 518.5h0M280.5 518.5h0M281.5 503.5h0M281.5 518.5h0M282.5 537.5h0M282.5 547.5h0M283.5 526.5h0M283.5 490.5h0M284.5 520.5h0M284.5 512.5h0M285.5 501.5h0M285.5 490.5h0M286.5 528.5h0M286.5 483.5h0M287.5 486.5h0M287.5 550.5h0M288.5 500.5h0M288.5 495.5h0M289.5 522.5h0M290.5 547.5h0M290.5 501.5h0M291.5 499.5h0M291.5 502.5h0M292.5 522.5h0M292.5 535.5h0M293.5 498.5h0M293.5 522.5h0M294.5 509.5h0M294.5 514.5h0M295.5 512.5h0M295.5 508.5h0M296.5 523.5h0M296.5 557.5h0M297.5 538.5h0M297.5 580.5h0M298.5 527.5h0M298.5 527.5h0M299.5 512.5h0M299.5 506.5h0M300.5 521.5h0M300.5 522.5h0M301.5 539.5h0M301.5 541.5h0M302.5 541.5h0M303.5 537.5h0M303.5 537.5h0M304.5 563.5h0M304.5 551.5h0M305.5 553.5h0M305.5 543.5h0M306.5 542.5h0M306.5 515.5h0M307.5 514.5h0M307.5 505.5h0M308.5 477.5h0M308.5 510.5h0M309.5 558.5h0M309.5 562.5h0M310.5 525.5h0M310.5 516.5h0M311.5 505.5h0M311.5 500.5h0M312.5 517.5h0M312.5 515.5h0M313.5 530.5h0M313.5 544.5h0M314.5 562.5h0M314.5 536.5h0M315.5 552.5h0M316.5 541.5h0M316.5 531.5h0M317.5 503.5h0M317.5 492.5h0M318.5 480.5h0M318.5 468.5h0M319.5 519.5h0M319.5 491.5h0M320.5 516.5h0M320.5 501.5h0M321.5 519.5h0M321.5 516.5h0M322.5 554.5h0M322.5 548.5h0M323.5 490.5h0M323.5 527.5h0M324.5 530.5h0M324.5 517.5h0M325.5 517.5h0M325.5 508.5h0M326.5 513.5h0M326.5 504.5h0M327.5 493.5h0M327.5 518.5h0M328.5 520.5h0M329.5 499.5h0M329.5 525.5h0M330.5 527.5h0M330.5 500.5h0M331.5 467.5h0M331.5 487.5h0M332.5 553.5h0M332.5 512.5h0M333.5 509.5h0M333.5 526.5h0M334.5 507.5h0M334.5 527.5h0M335.5 538.5h0M335.5 541.5h0M336.5 578.5h0M336.5 556.5h0M337.5 527.5h0M337.5 559.5h0M338.5 573.5h0M338.5 566.5h0M339.5 543.5h0M339.5 556.5h0M340.5 533.5h0M340.5 566.5h0M341.5 550.5h0M342.5 548.5h0M342.5 537.5h0M343.5 546.5h0M343.5 533.5h0M344.5 567.5h0M344.5 575.5h0M345.5 552.5h0M345.5 536.5h0M346.5 534.5h0M346.5 552.5h0M347.5 517.5h0M347.5 511.5h0M348.5 530.5h0M348.5 555.5h0M349.5 578.5h0M349.5 555.5h0M350.5 522.5h0M350.5 513.5h0M351.5 541.5h0M351.5 545.5h0M352.5 544.5h0M352.5 565.5h0M353.5 501.5h0M353.5 523.5h0M354.5 529.5h0M355.5 559.5h0M355.5 542.5h0M356.5 506.5h0M356.5 508.5h0M357.5 532.5h0M357.5 484.5h0M358.5 481.5h0M358.5 504.5h0M359.5 489.5h0M359.5 497.5h0M360.5 501.5h0M360.5 516.5h0M361.5 528.5h0M361.5 517.5h0M362.5 493.5h0M362.5 500.5h0M363.5 525.5h0M363.5 523.5h0M364.5 495.5h0M364.5 500.5h0M365.5 520.5h0M365.5 495.5h0M366.5 477.5h0M366.5 527.5h0M367.5 518.5h0M368.5 493.5h0M368.5 495.5h0M369.5 492.5h0M369.5 510.5h0M370.5 504.5h0M370.5 513.5h0M371.5 523.5h0M371.5 539.5h0M372.5 532.5h0M372.5 535.5h0M373.5 506.5h0M373.5 512.5h0M374.5 508.5h0M374.5 504.5h0M375.5 523.5h0M375.5 524.5h0M376.5 548.5h0M376.5 544.5h0M377.5 579.5h0M377.5 530.5h0M378.5 545.5h0M378.5 560.5h0M379.5 530.5h0M379.5 523.5h0M380.5 522.5h0M381.5 510.5h0M381.5 518.5h0M382.5 535.5h0M382.5 550.5h0M383.5 513.5h0M383.5 500.5h0M384.5 511.5h0M384.5 517.5h0M385.5 534.5h0M385.5 539.5h0M386.5 506.5h0M386.5 522.5h0M387.5 502.5h0M387.5 528.5h0M388.5 544.5h0M388.5 516.5h0M389.5 539.5h0M389.5 494.5h0M390.5 496.5h0M390.5 512.5h0M391.5 501.5h0M391.5 562.5h0M392.5 519.5h0M392.5 505.5h0M393.5 540.5h0M394.5 535.5h0M394.5 537.5h0M395.5 526.5h0M395.5 550.5h0M396.5 544.5h0M396.5 491.5h0M397.5 523.5h0M397.5 543.5h0M398.5 539.5h0M398.5 533.5h0M399.5 534.5h0M399.5 554.5h0M400.5 548.5h0M400.5 538.5h0M401.5 542.5h0M401.5 515.5h0M402.5 501.5h0M402.5 473.5h0M403.5 488.5h0M403.5 501.5h0M404.5 467.5h0M404.5 491.5h0M405.5 515.5h0M405.5 539.5h0M406.5 519.5h0M407.5 518.5h0M407.5 504.5h0M408.5 517.5h0M408.5 524.5h0M409.5 506.5h0M409.5 508.5h0M410.5 484.5h0M410.5 534.5h0M411.5 497.5h0M411.5 520.5h0M412.5 511.5h0M412.5 500.5h0M413.5 527.5h0M413.5 475.5h0M414.5 512.5h0M414.5 534.5h0M415.5 534.5h0M415.5 521.5h0M416.5 564.5h0M416.5 520.5h0M417.5 528.5h0M417.5 506.5h0M418.5 522.5h0M418.5 542.5h0M419.5 540.5h0M420.5 522.5h0M420.5 480.5h0M421.5 508.5h0M421.5 511.5h0M422.5 521.5h0M422.5 536.5h0M423.5 541.5h0M423.5 525.5h0M424.5 546.5h0M424.5 562.5h0M425.5 557.5h0M425.5 532.5h0M426.5 519.5h0M426.5 528.5h0M427.5 536.5h0M427.5 540.5h0M428.5 564.5h0M428.5 560.5h0M429.5 545.5h0M429.5 538.5h0M430.5 541.5h0M430.5 556.5h0M431.5 560.5h0M431.5 563.5h0M432.5 558.5h0M433.5 559.5h0M433.5 566.5h0M434.5 559.5h0M434.5 567.5h0M435.5 549.5h0M435.5 510.5h0M436.5 510.5h0M436.5 543.5h0M437.5 551.5h0M437.5 518.5h0M438.5 500.5h0M438.5 540.5h0M439.5 566.5h0M439.5 575.5h0M440.5 556.5h0M440.5 506.5h0M441.5 532.5h0M441.5 531.5h0M442.5 508.5h0M442.5 512.5h0M443.5 509.5h0M443.5 482.5h0M444.5 491.5h0M444.5 492.5h0M445.5 524.5h0M446.5 512.5h0M446.5 490.5h0M447.5 487.5h0M447.5 480.5h0M448.5 520.5h0M448.5 558.5h0M449.5 547.5h0M449.5 529.5h0M450.5 477.5h0M450.5 502.5h0M451.5 513.5h0M451.5 543.5h0M452.5 517.5h0M452.5 527.5h0M453.5 514.5h0M453.5 534.5h0M454.5 492.5h0M454.5 504.5h0M455.5 497.5h0M455.5 522.5h0M456.5 509.5h0M456.5 540.5h0M457.5 490.5h0M457.5 509.5h0M458.5 501.5h0M459.5 523.5h0M459.5 513.5h0M460.5 540.5h0M460.5 526.5h0M461.5 516.5h0M461.5 501.5h0M462.5 488.5h0M462.5 510.5h0M463.5 516.5h0M463.5 517.5h0M464.5 513.5h0M464.5 518.5h0M465.5 551.5h0M465.5 492.5h0M466.5 488.5h0M466.5 529.5h0M467.5 515.5h0M467.5 521.5h0M468.5 500.5h0M468.5 556.5h0M469.5 524.5h0M470.5 571.5h0M470.5 554.5h0M471.5 543.5h0M472.5 546.5h0M472.5 512.5h0M473.5 515.5h0M473.5 522.5h0M474.5 520.5h0M474.5 540.5h0M475.5 522.5h0M475.5 506.5h0M476.5 498.5h0M476.5 525.5h0M477.5 533.5h0M477.5 513.5h0M478.5 531.5h0M478.5 525.5h0M479.5 523.5h0M479.5 540.5h0M480.5 538.5h0M480.5 545.5h0M481.5 535.5h0M481.5 500.5h0M482.5 506.5h0M482.5 506.5h0M483.5 519.5h0M483.5 529.5h0M484.5 536.5h0M485.5 541.5h0M485.5 525.5h0M486.5 539.5h0M486.5 537.5h0M487.5 526.5h0M487.5 539.5h0M488.5 502.5h0M488.5 491.5h0M489.5 488.5h0M489.5 491.5h0M490.5 482.5h0M490.5 539.5h0M491.5 523.5h0M491.5 569.5h0M492.5 555.5h0M492.5 507.5h0M493.5 494.5h0M493.5 475.5h0M494.5 503.5h0M494.5 546.5h0M495.5 516.5h0M495.5 513.5h0M496.5 501.5h0M496.5 486.5h0M497.5 491.5h0M498.5 462.5h0M498.5 499.5h0M499.5 481.5h0M499.5 502.5h0M500.5 498.5h0M500.5 469.5h0M501.5 469.5h0M501.5 511.5h0M502.5 534.5h0M502.5 543.5h0M503.5 527.5h0M503.5 507.5h0M504.5 505.5h0M504.5 540.5h0M505.5 563.5h0M505.5 533.5h0M506.5 465.5h0M506.5 487.5h0M507.5 524.5h0M507.5 527.5h0M508.5 492.5h0M508.5 505.5h0M509.5 513.5h0M509.5 549.5h0M510.5 566.5h0M511.5 535.5h0M511.5 512.5h0M512.5 501.5h0M512.5 474.5h0M513.5 515.5h0M513.5 543.5h0M514.5 535.5h0M514.5 508.5h0M515.5 535.5h0M515.5 526.5h0M516.5 566.5h0M516.5 515.5h0M517.5 508.5h0M517.5 513.5h0M518.5 555.5h0M518.5 542.5h0M519.5 564.5h0M519.5 527.5h0M520.5 488.5h0M520.5 544.5h0M521.5 531.5h0M521.5 527.5h0M522.5 512.5h0M522.5 523.5h0M523.5 521.5h0M524.5 515.5h0M524.5 578.5h0M525.5 500.5h0M525.5 556.5h0M526.5 526.5h0M526.5 522.5h0M527.5 501.5h0M527.5 503.5h0M528.5 477.5h0M528.5 501.5h0M529.5 510.5h0M529.5 506.5h0M530.5 496.5h0M530.5 500.5h0M531.5 491.5h0M531.5 495.5h0M532.5 510.5h0M533.5 535.5h0M533.5 516.5h0M534.5 501.5h0M534.5 496.5h0M535.5 521.5h0M535.5 523.5h0M536.5 546.5h0M537.5 530.5h0M537.5 524.5h0M538.5 531.5h0M538.5 511.5h0M539.5 517.5h0M539.5 497.5h0M540.5 496.5h0M540.5 511.5h0M541.5 509.5h0M541.5 520.5h0M542.5 517.5h0M542.5 547.5h0M543.5 493.5h0M543.5 493.5h0M544.5 495.5h0M544.5 492.5h0M545.5 488.5h0M545.5 542.5h0M546.5 534.5h0M546.5 539.5h0M547.5 558.5h0M547.5 519.5h0M548.5 493.5h0M548.5 507.5h0M549.5 520.5h0M550.5 550.5h0M550.5 544.5h0M551.5 520.5h0M551.5 501.5h0M552.5 476.5h0M552.5 497.5h0M553.5 496.5h0M553.5 568.5h0M554.5 532.5h0M554.5 512.5h0M555.5 518.5h0M555.5 542.5h0M556.5 509.5h0M556.5 492.5h0M557.5 511.5h0M557.5 514.5h0M558.5 503.5h0M558.5 520.5h0M559.5 507.5h0M559.5 519.5h0M560.5 549.5h0M560.5 580.5h0M561.5 580.5h0M561.5 549.5h0M562.5 512.5h0M563.5 511.5h0M563.5 520.5h0M564.5 535.5h0M564.5 510.5h0M565.5 506.5h0M565.5 515.5h0M566.5 507.5h0M566.5 487.5h0M567.5 499.5h0M567.5 503.5h0M568.5 531.5h0M568.5 524.5h0M569.5 537.5h0M569.5 530.5h0M570.5 537.5h0M570.5 534.5h0M571.5 525.5h0M571.5 526.5h0M572.5 534.5h0M572.5 491.5h0M573.5 492.5h0M573.5 485.5h0M574.5 467.5h0M574.5 467.5h0M575.5 469.5h0M576.5 497.5h0M576.5 519.5h0M577.5 521.5h0M577.5 523.5h0M578.5 546.5h0M578.5 539.5h0M579.5 535.5h0M579.5 508.5h0M580.5 520.5h0M580.5 504.5h0M581.5 497.5h0M581.5 539.5h0M582.5 544.5h0M582.5 542.5h0M583.5 537.5h0M583.5 532.5h0M584.5 514.5h0M584.5 514.5h0M585.5 518.5h0M585.5 491.5h0M586.5 485.5h0M586.5 469.5h0M587.5 498.5h0M587.5 514.5h0M588.5 521.5h0M589.5 524.5h0M589.5 524.5h0M590.5 525.5h0M590.5 514.5h0M591.5 525.5h0M591.5 512.5h0M592.5 510.5h0M592.5 537.5h0M593.5 522.5h0M593.5 521.5h0M594.5 520.5h0M594.5 539.5h0M595.5 511.5h0M595.5 500.5h0M596.5 486.5h0M596.5 502.5h0M597.5 580.5h0M597.5 565.5h0M598.5 519.5h0M598.5 500.5h0M599.5 529.5h0M599.5 513.5h0M600.5 531.5h0M600.5 555.5h0M601.5 542.5h0M602.5 529.5h0M602.5 566.5h0M603.5 545.5h0M603.5 553.5h0M604.5 539.5h0M604.5 529.5h0M605.5 539.5h0M606.5 543.5h0M606.5 516.5h0M607.5 550.5h0M607.5 554.5h0M608.5 578.5h0M608.5 532.5h0M609.5 525.5h0M609.5 557.5h0M610.5 534.5h0M610.5 526.5h0M611.5 504.5h0M611.5 519.5h0M612.5 514.5h0M612.5 497.5h0M613.5 501.5h0M613.5 496.5h0M614.5 497.5h0M615.5 504.5h0M615.5 473.5h0M616.5 503.5h0M616.5 512.5h0M617.5 526.5h0M617.5 546.5h0M618.5 509.5h0M618.5 530.5h0M619.5 503.5h0M619.5 501.5h0M620.5 486.5h0M620.5 489.5h0M621.5 515.5h0M621.5 477.5h0M622.5 514.5h0M624.5 472.5h0M624.5 485.5h0M625.5 506.5h0M625.5 484.5h0M626.5 524.5h0M627.5 550.5h0M627.5 543.5h0M628.5 515.5h0M628.5 466.5h0M629.5 505.5h0M629.5 553.5h0M630.5 511.5h0M630.5 505.5h0M631.5 541.5h0M631.5 524.5h0M632.5 511.5h0M632.5 511.5h0M633.5 491.5h0M633.5 488.5h0M634.5 494.5h0M634.5 493.5h0M635.5 500.5h0M635.5 474.5h0M636.5 494.5h0M636.5 486.5h0M637.5 527.5h0M637.5 505.5h0M638.5 532.5h0M638.5 502.5h0M639.5 475.5h0M640.5 492.5h0M640.5 541.5h0M641.5 561.5h0M641.5 505.5h0M642.5 497.5h0M642.5 525.5h0M643.5 530.5h0M643.5 554.5h0M644.5 556.5h0M644.5 555.5h0M645.5 525.5h0M645.5 522.5h0M646.5 506.5h0M646.5 514.5h0M647.5 500.5h0M647.5 484.5h0M648.5 516.5h0M648.5 520.5h0M649.5 510.5h0M649.5 507.5h0M650.5 492.5h0M650.5 521.5h0M651.5 487.5h0M651.5 512.5h0M652.5 504.5h0M653.5 526.5h0M653.5 524.5h0M654.5 550.5h0M654.5 523.5h0M655.5 534.5h0M655.5 541.5h0M656.5 503.5h0M656.5 518.5h0M657.5 542.5h0M657.5 543.5h0M658.5 516.5h0M658.5 506.5h0M659.5 489.5h0M659.5 506.5h0M660.5 520.5h0M660.5 524.5h0M661.5 504.5h0M661.5 516.5h0M662.5 517.5h0M662.5 522.5h0M663.5 493.5h0M663.5 499.5h0M664.5 506.5h0M664.5 493.5h0M665.5 498.5h0M666.5 519.5h0M666.5 580.5h0M667.5 547.5h0M667.5 527.5h0M668.5 547.5h0M668.5 563.5h0M669.5 549.5h0M669.5 504.5h0M670.5 511.5h0M670.5 518.5h0M671.5 520.5h0M671.5 513.5h0M672.5 522.5h0M672.5 515.5h0M673.5 573.5h0M673.5 510.5h0M674.5 475.5h0M674.5 519.5h0M675.5 510.5h0M675.5 518.5h0M676.5 513.5h0M676.5 536.5h0M677.5 518.5h0M677.5 545.5h0M678.5 513.5h0M679.5 523.5h0M679.5 542.5h0M680.5 527.5h0M680.5 503.5h0M681.5 520.5h0M681.5 520.5h0M682.5 556.5h0M682.5 565.5h0M683.5 541.5h0M683.5 539.5h0M684.5 498.5h0M684.5 517.5h0M685.5 500.5h0M685.5 516.5h0M686.5 492.5h0M686.5 483.5h0M687.5 501.5h0M687.5 508.5h0M688.5 517.5h0M688.5 502.5h0M689.5 517.5h0M689.5 503.5h0M690.5 517.5h0M690.5 550.5h0M691.5 573.5h0M692.5 543.5h0M692.5 565.5h0M693.5 506.5h0M693.5 506.5h0M694.5 533.5h0M694.5 546.5h0M695.5 508.5h0M695.5 514.5h0M696.5 521.5h0M696.5 524.5h0M697.5 503.5h0M697.5 483.5h0M698.5 516.5h0M698.5 509.5h0M699.5 542.5h0M699.5 538.5h0M700.5 552.5h0M700.5 527.5h0M701.5 541.5h0M701.5 546.5h0M702.5 563.5h0M702.5 517.5h0M703.5 487.5h0M703.5 464.5h0M704.5 501.5h0M705.5 536.5h0M705.5 523.5h0M706.5 523.5h0M706.5 552.5h0M707.5 547.5h0M707.5 532.5h0M708.5 514.5h0M708.5 525.5h0M709.5 539.5h0M709.5 510.5h0M710.5 484.5h0M711.5 508.5h0M711.5 514.5h0M712.5 520.5h0M712.5 534.5h0M713.5 550.5h0M713.5 518.5h0M714.5 542.5h0M714.5 527.5h0M715.5 513.5h0M716.5 503.5h0M716.5 487.5h0M717.5 511.5h0M718.5 490.5h0M718.5 512.5h0M719.5 529.5h0M719.5 539.5h0M720.5 533.5h0M720.5 499.5h0M721.5 538.5h0M721.5 549.5h0M722.5 559.5h0M722.5 518.5h0M723.5 517.5h0M723.5 527.5h0M724.5 531.5h0M724.5 519.5h0M725.5 518.5h0M725.5 498.5h0M726.5 523.5h0M726.5 495.5h0M727.5 507.5h0M727.5 500.5h0M728.5 532.5h0M728.5 521.5h0M729.5 544.5h0M729.5 508.5h0M730.5 480.5h0M731.5 477.5h0M731.5 510.5h0M732.5 501.5h0M732.5 523.5h0M733.5 530.5h0M733.5 523.5h0M734.5 492.5h0M734.5 508.5h0M735.5 552.5h0M735.5 563.5h0M736.5 550.5h0M736.5 532.5h0M737.5 527.5h0M737.5 547.5h0M738.5 529.5h0M738.5 538.5h0M739.5 526.5h0M739.5 536.5h0M740.5 534.5h0M740.5 509.5h0M741.5 492.5h0M741.5 495.5h0M742.5 483.5h0M742.5 501.5h0M743.5 529.5h0M744.5 557.5h0M744.5 552.5h0M745.5 528.5h0M745.5 498.5h0M746.5 515.5h0M746.5 543.5h0M747.5 531.5h0M747.5 520.5h0M748.5 523.5h0M748.5 567.5h0M749.5 556.5h0M749.5 542.5h0M750.5 491.5h0M750.5 499.5h0M751.5 521.5h0M751.5 525.5h0M752.5 512.5h0M752.5 502.5h0M753.5 531.5h0M753.5 530.5h0M754.5 527.5h0M754.5 523.5h0M755.5 530.5h0M755.5 509.5h0M756.5 490.5h0M757.5 528.5h0M757.5 525.5h0M758.5 527.5h0M758.5 512.5h0M759.5 521.5h0M759.5 532.5h0M760.5 548.5h0M760.5 527.5h0M761.5 589.5h0M762.5 527.5h0M762.5 528.5h0M763.5 529.5h0M763.5 518.5h0M764.5 514.5h0M764.5 519.5h0M765.5 509.5h0M765.5 511.5h0M766.5 526.5h0M766.5 553.5h0M767.5 557.5h0M767.5 542.5h0M768.5 549.5h0M768.5 527.5h0M769.5 500.5h0M770.5 515.5h0M770.5 480.5h0M771.5 492.5h0M771.5 506.5h0M772.5 494.5h0M772.5 508.5h0M773.5 496.5h0M773.5 542.5h0M774.5 517.5h0M774.5 532.5h0M775.5 503.5h0M775.5 499.5h0M776.5 493.5h0M776.5 533.5h0M777.5 515.5h0M777.5 536.5h0M778.5 529.5h0M778.5 534.5h0M779.5 539.5h0M779.5 500.5h0M780.5 512.5h0M780.5 510.5h0M781.5 510.5h0M781.5 556.5h0M782.5 544.5h0M783.5 551.5h0M783.5 549.5h0M784.5 526.5h0M784.5 530.5h0M785.5 537.5h0M785.5 558.5h0M786.5 527.5h0M786.5 519.5h0M787.5 497.5h0M787.5 521.5h0M788.5 555.5h0M788.5 502.5h0M789.5 578.5h0M789.5 549.5h0M790.5 566.5h0M790.5 550.5h0M791.5 524.5h0M791.5 525.5h0M792.5 526.5h0M792.5 496.5h0M793.5 529.5h0M793.5 533.5h0M794.5 517.5h0M794.5 504.5h0M795.5 492.5h0M796.5 490.5h0M796.5 530.5h0M797.5 518.5h0M797.5 542.5h0M798.5 520.5h0M798.5 539.5h0M799.5 514.5h0M799.5 486.5h0M800.5 508.5h0M800.5 507.5h0M801.5 517.5h0M801.5 553.5h0M802.5 537.5h0M802.5 514.5h0M803.5 512.5h0M803.5 527.5h0M804.5 527.5h0M804.5 567.5h0M805.5 541.5h0M805.5 574.5h0M806.5 566.5h0M806.5 518.5h0M807.5 535.5h0M807.5 528.5h0M808.5 512.5h0M809.5 498.5h0M809.5 527.5h0M810.5 533.5h0M810.5 535.5h0M811.5 512.5h0M811.5 532.5h0M812.5 510.5h0M812.5 507.5h0M813.5 489.5h0M813.5 483.5h0M814.5 482.5h0M814.5 493.5h0M815.5 511.5h0M815.5 514.5h0M816.5 548.5h0M816.5 545.5h0M817.5 530.5h0M817.5 516.5h0M818.5 533.5h0M818.5 502.5h0M819.5 544.5h0M820.5 493.5h0M820.5 508.5h0M821.5 525.5h0M822.5 542.5h0M822.5 553.5h0M823.5 518.5h0M823.5 504.5h0M824.5 494.5h0M824.5 493.5h0M825.5 516.5h0M825.5 506.5h0M826.5 505.5h0M826.5 521.5h0M827.5 528.5h0M827.5 522.5h0M828.5 537.5h0M828.5 529.5h0M829.5 516.5h0M829.5 516.5h0M830.5 511.5h0M830.5 549.5h0M831.5 561.5h0M831.5 500.5h0M832.5 512.5h0M832.5 513.5h0M833.5 527.5h0M833.5 496.5h0M834.5 527.5h0M835.5 518.5h0M835.5 489.5h0M836.5 507.5h0M836.5 534.5h0M837.5 531.5h0M837.5 517.5h0M838.5 524.5h0M838.5 532.5h0M839.5 527.5h0M839.5 531.5h0M840.5 542.5h0M840.5 528.5h0M841.5 502.5h0M841.5 534.5h0M842.5 510.5h0M842.5 543.5h0M843.5 513.5h0M843.5 526.5h0M844.5 522.5h0M844.5 509.5h0M845.5 518.5h0M845.5 522.5h0M846.5 506.5h0M846.5 482.5h0M847.5 494.5h0M848.5 536.5h0M848.5 540.5h0M849.5 512.5h0M849.5 523.5h0M850.5 512.5h0M850.5 519.5h0M851.5 528.5h0M851.5 562.5h0M852.5 561.5h0M852.5 552.5h0M853.5 534.5h0M853.5 542.5h0M854.5 507.5h0M854.5 533.5h0M855.5 582.5h0M855.5 506.5h0M856.5 511.5h0M856.5 542.5h0M857.5 509.5h0M857.5 534.5h0M858.5 547.5h0M858.5 511.5h0M859.5 530.5h0M859.5 531.5h0M860.5 563.5h0M861.5 508.5h0M861.5 539.5h0M862.5 552.5h0M862.5 553.5h0M863.5 552.5h0M863.5 529.5h0M864.5 501.5h0M864.5 494.5h0M865.5 513.5h0M865.5 530.5h0M866.5 545.5h0M866.5 537.5h0M867.5 559.5h0M867.5 508.5h0M868.5 537.5h0M868.5 540.5h0M869.5 494.5h0M869.5 496.5h0M870.5 522.5h0M870.5 518.5h0M871.5 489.5h0M871.5 527.5h0M872.5 546.5h0M872.5 539.5h0M873.5 553.5h0M874.5 546.5h0M874.5 546.5h0M875.5 582.5h0M875.5 530.5h0M876.5 539.5h0M876.5 554.5h0M877.5 559.5h0M877.5 543.5h0M878.5 559.5h0M878.5 555.5h0M879.5 567.5h0M879.5 528.5h0M880.5 509.5h0M880.5 508.5h0M881.5 534.5h0M881.5 537.5h0M882.5 556.5h0M882.5 537.5h0M883.5 511.5h0M883.5 497.5h0M884.5 506.5h0M884.5 528.5h0M885.5 510.5h0M885.5 525.5h0M886.5 539.5h0M887.5 556.5h0M887.5 553.5h0M888.5 513.5h0M888.5 514.5h0M889.5 494.5h0M889.5 488.5h0M890.5 542.5h0M890.5 528.5h0M891.5 509.5h0M891.5 496.5h0M892.5 521.5h0M892.5 525.5h0M893.5 507.5h0M893.5 483.5h0M894.5 519.5h0M894.5 547.5h0M895.5 535.5h0M895.5 534.5h0M896.5 577.5h0M896.5 534.5h0M897.5 548.5h0M897.5 550.5h0M898.5 495.5h0M898.5 504.5h0M899.5 508.5h0M900.5 508.5h0M900.5 533.5h0M901.5 477.5h0M901.5 479.5h0M902.5 500.5h0M902.5 526.5h0M903.5 525.5h0M903.5 544.5h0M904.5 514.5h0M904.5 514.5h0M905.5 514.5h0M905.5 504.5h0M906.5 477.5h0M906.5 485.5h0M907.5 532.5h0M907.5 539.5h0M908.5 533.5h0M908.5 544.5h0M909.5 517.5h0M909.5 488.5h0M910.5 519.5h0M910.5 522.5h0M911.5 514.5h0M911.5 523.5h0M912.5 544.5h0M913.5 561.5h0M913.5 565.5h0M914.5 556.5h0M914.5 514.5h0M915.5 498.5h0M915.5 537.5h0M916.5 521.5h0M916.5 537.5h0M917.5 507.5h0M917.5 516.5h0M918.5 517.5h0M918.5 521.5h0M919.5 530.5h0M919.5 523.5h0M920.5 529.5h0M920.5 546.5h0M921.5 533.5h0M921.5 509.5h0M922.5 537.5h0M922.5 466.5h0M923.5 528.5h0M923.5 562.5h0M924.5 552.5h0M924.5 557.5h0M925.5 533.5h0M926.5 559.5h0M926.5 532.5h0M927.5 571.5h0M927.5 553.5h0M928.5 520.5h0M928.5 579.5h0M929.5 529.5h0M929.5 528.5h0M930.5 527.5h0M930.5 584.5h0M931.5 558.5h0M931.5 523.5h0M932.5 540.5h0M932.5 540.5h0M933.5 530.5h0M933.5 519.5h0M934.5 543.5h0M934.5 553.5h0M935.5 547.5h0M935.5 520.5h0M936.5 531.5h0M936.5 519.5h0M937.5 535.5h0M937.5 552.5h0M938.5 522.5h0M939.5 534.5h0M939.5 486.5h0M940.5 529.5h0M940.5 553.5h0M941.5 531.5h0M941.5 519.5h0M942.5 512.5h0M942.5 524.5h0M943.5 532.5h0M943.5 510.5h0M944.5 500.5h0M944.5 500.5h0M945.5 498.5h0M945.5 510.5h0M946.5 538.5h0M946.5 578.5h0M947.5 515.5h0M947.5 484.5h0M948.5 523.5h0M948.5 531.5h0M949.5 559.5h0M949.5 555.5h0M950.5 549.5h0M950.5 565.5h0M951.5 518.5h0M952.5 517.5h0M952.5 516.5h0M953.5 502.5h0M953.5 483.5h0M954.5 520.5h0M954.5 502.5h0M955.5 540.5h0M955.5 558.5h0M956.5 526.5h0M956.5 485.5h0M957.5 528.5h0M957.5 537.5h0M958.5 541.5h0M958.5 568.5h0M959.5 525.5h0M959.5 534.5h0M960.5 517.5h0M960.5 511.5h0M961.5 515.5h0M961.5 536.5h0M962.5 519.5h0M962.5 496.5h0M963.5 492.5h0M963.5 504.5h0M964.5 542.5h0M965.5 555.5h0M965.5 570.5h0M966.5 576.5h0M966.5 538.5h0M967.5 517.5h0M967.5 508.5h0M968.5 516.5h0M968.5 554.5h0M969.5 570.5h0M969.5 572.5h0M970.5 564.5h0M970.5 573.5h0M971.5 563.5h0M971.5 534.5h0M972.5 571.5h0M972.5 548.5h0M973.5 584.5h0M973.5 544.5h0M974.5 548.5h0M975.5 561.5h0M975.5 534.5h0M976.5 502.5h0M976.5 488.5h0M977.5 534.5h0M978.5 536.5h0M978.5 549.5h0M979.5 568.5h0M979.5 565.5h0M980.5 498.5h0M980.5 506.5h0M981.5 562.5h0M981.5 561.5h0M982.5 535.5h0M982.5 562.5h0M983.5 534.5h0M983.5 522.5h0M984.5 490.5h0M984.5 550.5h0M985.5 548.5h0M985.5 537.5h0M986.5 535.5h0M986.5 523.5h0M987.5 579.5h0M987.5 563.5h0M988.5 516.5h0M988.5 528.5h0M989.5 504.5h0M989.5 527.5h0M990.5 517.5h0M991.5 494.5h0M991.5 497.5h0M992.5 478.5h0M992.5 519.5h0M993.5 517.5h0M993.5 518.5h0M994.5 486.5h0M994.5 499.5h0M995.5 508.5h0M995.5 486.5h0M996.5 466.5h0M996.5 501.5h0M997.5 500.5h0M997.5 518.5h0M998.5 517.5h0M998.5 528.5h0M999.5 544.5h0M999.5 513.5h0M1000.5 544.5h0M1000.5 552.5h0M1001.5 567.5h0M1001.5 520.5h0M1002.5 523.5h0M1002.5 494.5h0M1003.5 548.5h0M1004.5 540.5h0M1004.5 578.5h0M1005.5 554.5h0M1006.5 502.5h0M1006.5 493.5h0M1007.5 532.5h0M1007.5 558.5h0M1008.5 554.5h0M1008.5 557.5h0M1009.5 552.5h0M1009.5 538.5h0M1010.5 537.5h0M1010.5 552.5h0M1011.5 523.5h0M1011.5 527.5h0M1012.5 500.5h0M1012.5 484.5h0M1013.5 521.5h0M1013.5 537.5h0M1014.5 499.5h0M1014.5 495.5h0M1015.5 504.5h0M1015.5 521.5h0M1016.5 550.5h0M1017.5 571.5h0M1017.5 565.5h0M1018.5 547.5h0M1018.5 538.5h0M1019.5 520.5h0M1019.5 549.5h0M1020.5 538.5h0M1020.5 522.5h0M1021.5 549.5h0M1021.5 523.5h0M1022.5 543.5h0M1022.5 549.5h0M1023.5 582.5h0M1023.5 533.5h0M1024.5 499.5h0M1024.5 540.5h0M1025.5 542.5h0M1025.5 539.5h0M1026.5 548.5h0M1026.5 521.5h0M1027.5 485.5h0M1027.5 464.5h0M1028.5 489.5h0M1028.5 531.5h0M1029.5 526.5h0M1030.5 492.5h0M1030.5 531.5h0M1031.5 524.5h0M1031.5 541.5h0M1032.5 558.5h0M1032.5 517.5h0M1033.5 526.5h0M1033.5 589.5h0M1034.5 506.5h0M1034.5 498.5h0M1035.5 554.5h0M1035.5 554.5h0M1036.5 563.5h0M1036.5 568.5h0M1037.5 536.5h0M1037.5 536.5h0M1038.5 530.5h0M1038.5 544.5h0M1039.5 533.5h0M1039.5 547.5h0M1040.5 518.5h0M1040.5 518.5h0M1041.5 528.5h0M1041.5 540.5h0M1042.5 537.5h0M1043.5 554.5h0M1043.5 523.5h0M1044.5 527.5h0M1044.5 558.5h0M1045.5 531.5h0M1045.5 516.5h0M1046.5 545.5h0M1046.5 544.5h0M1047.5 506.5h0M1047.5 542.5h0M1048.5 574.5h0M1048.5 544.5h0M1049.5 534.5h0M1049.5 551.5h0M1050.5 532.5h0M1050.5 502.5h0M1051.5 520.5h0M1051.5 511.5h0M1052.5 518.5h0M1052.5 521.5h0M1053.5 554.5h0M1053.5 577.5h0M1054.5 551.5h0M1055.5 557.5h0M1056.5 580.5h0M1056.5 566.5h0M1057.5 534.5h0M1057.5 575.5h0M1058.5 573.5h0M1058.5 568.5h0M1059.5 569.5h0M1059.5 583.5h0M1060.5 561.5h0M1061.5 566.5h0M1061.5 579.5h0M1062.5 579.5h0M1062.5 576.5h0M1063.5 557.5h0M1063.5 531.5h0M1064.5 523.5h0M1064.5 558.5h0M1065.5 573.5h0M1065.5 535.5h0M1066.5 538.5h0M1066.5 530.5h0M1067.5 538.5h0M1067.5 579.5h0M1068.5 575.5h0M1069.5 543.5h0M1069.5 563.5h0M1070.5 569.5h0M1070.5 543.5h0M1071.5 505.5h0M1071.5 526.5h0M1072.5 512.5h0M1072.5 531.5h0M1073.5 530.5h0M1073.5 565.5h0M1074.5 542.5h0M1074.5 544.5h0M1075.5 551.5h0M1075.5 546.5h0M1076.5 507.5h0M1076.5 477.5h0M1077.5 487.5h0M1077.5 531.5h0M1078.5 527.5h0M1078.5 498.5h0M1079.5 500.5h0M1079.5 542.5h0M1080.5 555.5h0M1080.5 561.5h0M1081.5 527.5h0M1082.5 463.5h0M1082.5 510.5h0M1083.5 522.5h0M1083.5 542.5h0M1084.5 526.5h0M1084.5 518.5h0M1085.5 491.5h0M1085.5 518.5h0M1086.5 492.5h0M1086.5 482.5h0M1087.5 540.5h0M1087.5 561.5h0M1088.5 559.5h0M1088.5 514.5h0M1089.5 520.5h0M1089.5 512.5h0M1090.5 485.5h0M1091.5 498.5h0M1091.5 472.5h0M1092.5 490.5h0M1092.5 501.5h0M1093.5 499.5h0M1093.5 491.5h0M1094.5 491.5h0M1095.5 488.5h0M1095.5 513.5h0M1096.5 525.5h0M1096.5 535.5h0M1097.5 511.5h0M1097.5 507.5h0M1098.5 526.5h0M1098.5 545.5h0M1099.5 526.5h0M1099.5 529.5h0M1100.5 544.5h0M1100.5 547.5h0M1101.5 580.5h0M1101.5 546.5h0M1102.5 516.5h0M1102.5 475.5h0M1103.5 501.5h0M1103.5 530.5h0M1104.5 528.5h0M1104.5 495.5h0M1105.5 511.5h0M1106.5 550.5h0M1106.5 550.5h0M1107.5 558.5h0M1108.5 561.5h0M1108.5 552.5h0M1109.5 511.5h0M1109.5 556.5h0M1110.5 547.5h0M1110.5 488.5h0M1111.5 522.5h0M1111.5 583.5h0M1112.5 557.5h0M1112.5 551.5h0M1113.5 519.5h0M1113.5 524.5h0M1114.5 503.5h0M1114.5 534.5h0M1115.5 519.5h0M1115.5 542.5h0M1116.5 516.5h0M1116.5 491.5h0M1117.5 472.5h0M1117.5 503.5h0M1118.5 521.5h0M1118.5 549.5h0M1119.5 544.5h0M1119.5 545.5h0M1120.5 532.5h0M1121.5 500.5h0M1121.5 510.5h0M1122.5 524.5h0M1122.5 564.5h0M1123.5 512.5h0M1123.5 515.5h0M1124.5 529.5h0M1124.5 526.5h0M1125.5 560.5h0M1125.5 541.5h0M1126.5 537.5h0M1126.5 519.5h0M1127.5 486.5h0M1127.5 491.5h0M1128.5 540.5h0M1128.5 532.5h0M1129.5 511.5h0M1129.5 513.5h0M1130.5 541.5h0M1130.5 528.5h0M1131.5 520.5h0M1131.5 502.5h0M1132.5 520.5h0M1132.5 529.5h0M1133.5 517.5h0M1134.5 541.5h0M1134.5 522.5h0M1135.5 516.5h0M1135.5 515.5h0M1136.5 535.5h0M1136.5 544.5h0M1137.5 510.5h0M1137.5 495.5h0M1138.5 534.5h0M1138.5 537.5h0M1139.5 527.5h0M1139.5 523.5h0M1140.5 503.5h0M1140.5 486.5h0M1141.5 513.5h0M1141.5 558.5h0M1142.5 537.5h0M1142.5 546.5h0M1143.5 550.5h0M1143.5 562.5h0M1144.5 554.5h0M1144.5 531.5h0M1145.5 526.5h0M1145.5 504.5h0M1146.5 497.5h0M1147.5 515.5h0M1147.5 528.5h0M1148.5 505.5h0M1148.5 512.5h0M1149.5 516.5h0M1149.5 557.5h0M1150.5 580.5h0M1150.5 578.5h0M1151.5 568.5h0M1151.5 539.5h0M1152.5 529.5h0M1152.5 545.5h0M1153.5 579.5h0M1153.5 551.5h0M1154.5 556.5h0M1154.5 557.5h0M1155.5 556.5h0M1155.5 538.5h0M1156.5 561.5h0M1156.5 543.5h0M1157.5 530.5h0M1157.5 519.5h0M1158.5 506.5h0M1158.5 515.5h0M1159.5 539.5h0M1160.5 486.5h0M1160.5 495.5h0M1161.5 484.5h0M1161.5 508.5h0M1162.5 536.5h0M1162.5 529.5h0M1163.5 536.5h0M1163.5 529.5h0M1164.5 521.5h0M1164.5 540.5h0M1165.5 535.5h0M1165.5 533.5h0M1166.5 529.5h0M1166.5 523.5h0M1167.5 524.5h0M1167.5 515.5h0M1168.5 542.5h0M1168.5 523.5h0M1169.5 466.5h0M1169.5 474.5h0M1170.5 503.5h0M1170.5 552.5h0M1171.5 569.5h0M1171.5 538.5h0M1172.5 525.5h0M1173.5 535.5h0M1173.5 537.5h0M1174.5 528.5h0M1174.5 578.5h0M1175.5 521.5h0M1175.5 511.5h0M1176.5 540.5h0M1176.5 551.5h0M1177.5 536.5h0M1177.5 552.5h0M1178.5 499.5h0M1178.5 503.5h0M1179.5 533.5h0M1179.5 512.5h0M1180.5 547.5h0M1180.5 549.5h0M1181.5 523.5h0M1181.5 535.5h0M1182.5 519.5h0M1183.5 518.5h0M1183.5 557.5h0M1184.5 579.5h0M1184.5 542.5h0M1185.5 532.5h0M1186.5 549.5h0M1186.5 529.5h0M1187.5 558.5h0M1187.5 531.5h0M1188.5 509.5h0M1188.5 526.5h0M1189.5 542.5h0M1189.5 529.5h0M1190.5 544.5h0M1190.5 530.5h0M1191.5 515.5h0M1191.5 504.5h0M1192.5 518.5h0M1192.5 533.5h0M1193.5 522.5h0M1193.5 498.5h0M1194.5 497.5h0M1194.5 516.5h0M1195.5 545.5h0M1195.5 556.5h0M1196.5 557.5h0M1196.5 562.5h0M1197.5 524.5h0M1197.5 543.5h0M1198.5 507.5h0M1199.5 517.5h0M1199.5 505.5h0M1200.5 511.5h0M1200.5 517.5h0M1201.5 519.5h0M1201.5 505.5h0M1202.5 518.5h0M1202.5 527.5h0M1203.5 521.5h0M1203.5 551.5h0M1204.5 538.5h0M1204.5 524.5h0M1205.5 511.5h0M1205.5 496.5h0M1206.5 500.5h0M1206.5 474.5h0M1207.5 489.5h0M1207.5 501.5h0M1208.5 482.5h0M1208.5 521.5h0M1209.5 493.5h0M1209.5 485.5h0M1210.5 511.5h0M1210.5 477.5h0M1211.5 483.5h0M1212.5 512.5h0M1212.5 506.5h0M1213.5 484.5h0M1213.5 473.5h0M1214.5 496.5h0M1214.5 492.5h0M1215.5 465.5h0M1215.5 515.5h0M1216.5 522.5h0M1216.5 521.5h0M1217.5 556.5h0M1217.5 529.5h0M1218.5 512.5h0M1218.5 523.5h0M1219.5 529.5h0M1219.5 502.5h0M1220.5 530.5h0M1220.5 538.5h0M1221.5 541.5h0M1221.5 533.5h0M1222.5 525.5h0M1222.5 548.5h0M1223.5 524.5h0M1223.5 537.5h0M1225.5 495.5h0M1225.5 515.5h0M1226.5 557.5h0M1226.5 562.5h0M1227.5 548.5h0M1227.5 549.5h0M1228.5 523.5h0M1228.5 536.5h0M1229.5 578.5h0M1229.5 583.5h0M1230.5 567.5h0M1230.5 574.5h0M1231.5 581.5h0M1231.5 566.5h0M1232.5 523.5h0M1233.5 491.5h0M1233.5 496.5h0M1234.5 530.5h0M1235.5 526.5h0M1235.5 528.5h0M1236.5 581.5h0M1236.5 577.5h0M1238.5 547.5h0M1238.5 568.5h0M1239.5 572.5h0M1239.5 572.5h0M1240.5 566.5h0M1240.5 553.5h0M1241.5 547.5h0M1242.5 569.5h0M1242.5 531.5h0M1243.5 552.5h0M1243.5 559.5h0M1244.5 517.5h0M1244.5 522.5h0M1245.5 552.5h0M1245.5 566.5h0M1246.5 529.5h0M1246.5 519.5h0M1247.5 531.5h0M1247.5 544.5h0M1248.5 518.5h0M1248.5 514.5h0M1249.5 512.5h0M1249.5 526.5h0M1250.5 549.5h0M1251.5 529.5h0M1251.5 531.5h0M1252.5 514.5h0M1252.5 473.5h0M1253.5 499.5h0M1253.5 501.5h0M1254.5 503.5h0M1254.5 539.5h0M1255.5 526.5h0M1255.5 525.5h0M1256.5 550.5h0M1256.5 523.5h0M1257.5 536.5h0M1257.5 542.5h0M1258.5 500.5h0M1258.5 489.5h0M1259.5 493.5h0M1259.5 533.5h0M1260.5 558.5h0M1260.5 481.5h0M1261.5 492.5h0M1261.5 520.5h0M1262.5 506.5h0M1262.5 513.5h0M1263.5 528.5h0M1264.5 498.5h0M1264.5 513.5h0M1265.5 551.5h0M1265.5 571.5h0M1266.5 547.5h0M1266.5 531.5h0M1267.5 481.5h0M1267.5 478.5h0M1268.5 487.5h0M1268.5 500.5h0M1269.5 521.5h0M1269.5 495.5h0M1270.5 499.5h0M1270.5 504.5h0M1271.5 510.5h0M1271.5 520.5h0M1272.5 521.5h0M1272.5 540.5h0M1273.5 547.5h0M1273.5 542.5h0M1274.5 578.5h0M1274.5 553.5h0M1275.5 539.5h0M1275.5 532.5h0M1276.5 513.5h0M1277.5 500.5h0M1277.5 475.5h0M1278.5 525.5h0M1278.5 543.5h0M1279.5 527.5h0M1279.5 530.5h0M1280.5 540.5h0M1280.5 579.5h0M1281.5 535.5h0M1281.5 576.5h0M1282.5 549.5h0M1282.5 532.5h0M1283.5 532.5h0M1283.5 538.5h0M1284.5 563.5h0M1284.5 534.5h0M1285.5 534.5h0M1285.5 500.5h0M1286.5 520.5h0M1286.5 522.5h0M1287.5 548.5h0M1287.5 512.5h0M1288.5 534.5h0M1288.5 538.5h0M1289.5 532.5h0M1290.5 539.5h0M1290.5 513.5h0M1291.5 529.5h0M1291.5 574.5h0M1292.5 552.5h0M1292.5 540.5h0M1293.5 542.5h0M1293.5 522.5h0M1294.5 514.5h0M1294.5 548.5h0M1295.5 527.5h0M1295.5 508.5h0M1296.5 524.5h0M1296.5 541.5h0M1297.5 547.5h0M1297.5 574.5h0M1298.5 578.5h0M1298.5 527.5h0M1299.5 528.5h0M1299.5 545.5h0M1300.5 535.5h0M1300.5 515.5h0M1301.5 520.5h0M1301.5 511.5h0M1302.5 512.5h0M1303.5 527.5h0" fill="none" stroke="#000" stroke-width="3.7" stroke-linecap="round"/>
<rect x="105" y="499" width="1255" height="49" fill="#f00" fill-opacity="0.1"/>
<path d="M162 665.88V380.33" stroke="#800080" stroke-width="2.08" stroke-dasharray="2.08 3.44" fill="none"/>
<path d="M1303 665.88V380.33" stroke="#800080" stroke-width="2.08" stroke-dasharray="2.08 3.44" fill="none"/>
<path d="M161.11 523.5H1304.89" stroke="#ffa500" stroke-width="2.78" fill="none"/>
<path d="M103.96 523H1361.04" stroke="#f00" stroke-width="2.08" fill="none"/>
<rect x="162" y="499" width="1141" height="49" fill="#ffa500" fill-opacity="0.1"/>
</g>
<rect x="105.5" y="380.5" width="1380" height="286" fill="none" stroke="#000" stroke-width="1.11" stroke-linejoin="miter"/>
<path d="M162.5 666.5v4.86M422.5 666.5v4.86M682.5 666.5v4.86M942.5 666.5v4.86M1202.5 666.5v4.86M1462.5 666.5v4.86M105.5 637.5h-4.86M105.5 589.5h-4.86M105.5 540.5h-4.86M105.5 492.5h-4.86M105.5 443.5h-4.86M105.5 395.5h-4.86" stroke="#000" stroke-width="1.11" fill="none"/>
<clipPath id="c3"><rect x="105.1" y="725.33" width="1379.9" height="228.76"/></clipPath>
<g clip-path="url(#c3)">
<path d="M105.1 921.5H1485" stroke="#b0b0b0" stroke-width="1.11" stroke-dasharray="1.11 1.83" fill="none"/>
<path d="M105.1 889.5H1485" stroke="#b0b0b0" stroke-width="1.11" stroke-dasharray="1.11 1.83" fill="none"/>
<path d="M105.1 856.5H1485" stroke="#b0b0b0" stroke-width="1.11" stroke-dasharray="1.11 1.83" fill="none"/>
<path d="M105.1 823.5H1485" stroke="#b0b0b0" stroke-width="1.11" stroke-dasharray="1.11 1.83" fill="none"/>
<path d="M105.1 791.5H1485" stroke="#b0b0b0" stroke-width="1.11" stroke-dasharray="1.11 1.83" fill="none"/>
<path d="M105.1 758.5H1485" stroke="#b0b0b0" stroke-width="1.11" stroke-dasharray="1.11 1.83" fill="none"/>
<path d="M1303.5 758.5h0" fill="none" stroke="#000" stroke-width="2.9" stroke-linecap="round"/>
<path d="M162 953.69V725.33" stroke="#800080" stroke-width="2.08" stroke-dasharray="2.08 3.44" fill="none"/>
<path d="M1303 953.69V725.33" stroke="#800080" stroke-width="2.08" stroke-dasharray="2.08 3.44" fill="none"/>
</g>
<rect x="105.5" y="725.5" width="1380" height="229" fill="none" stroke="#000" stroke-width="1.11" stroke-linejoin="miter"/>
<path d="M105.5 921.5h-4.86M105.5 889.5h-4.86M105.5 856.5h-4.86M105.5 823.5h-4.86M105.5 791.5h-4.86M105.5 758.5h-4.86" stroke="#000" stroke-width="1.11" fill="none"/>
<clipPath id="c4"><rect x="105.1" y="954.09" width="1379.9" height="57.19"/></clipPath>
<g clip-path="url(#c4)">
<path d="M105.1 1009.5H1485" stroke="#b0b0b0" stroke-width="1.11" stroke-dasharray="1.11 1.83" fill="none"/>
<path d="M105.1 983.5H1485" stroke="#b0b0b0" stroke-width="1.11" stroke-dasharray="1.11 1.83" fill="none"/>
<path d="M105.1 957.5H1485" stroke="#b0b0b0" stroke-width="1.11" stroke-dasharray="1.11 1.83" fill="none"/>
<path d="M162.5 1008.5h0M163.5 1008.5h0M163.5 1008.5h0M164.5 1008.5h0M164.5 1008.5h0M165.5 1008.5h0M165.5 1007.5h0M166.5 1007.5h0M166.5 1008.5h0M167.5 1008.5h0M167.5 1008.5h0M168.5 1007.5h0M168.5 1008.5h0M169.5 1007.5h0M169.5 1007.5h0M170.5 1007.5h0M170.5 1008.5h0M171.5 1008.5h0M171.5 1007.5h0M172.5 1007.5h0M173.5 1007.5h0M173.5 1008.5h0M174.5 1007.5h0M174.5 1007.5h0M175.5 1007.5h0M175.5 1007.5h0M176.5 1007.5h0M176.5 1007.5h0M177.5 1008.5h0M177.5 1007.5h0M178.5 1007.5h0M178.5 1007.5h0M179.5 1008.5h0M179.5 1008.5h0M180.5 1007.5h0M180.5 1007.5h0M181.5 1007.5h0M181.5 1008.5h0M182.5 1007.5h0M182.5 1007.5h0M183.5 1007.5h0M183.5 1007.5h0M184.5 1007.5h0M184.5 1007.5h0M185.5 1008.5h0M186.5 1007.5h0M186.5 1007.5h0M187.5 1007.5h0M187.5 1007.5h0M188.5 1007.5h0M188.5 1007.5h0M189.5 1007.5h0M189.5 1007.5h0M190.5 1007.5h0M190.5 1007.5h0M191.5 1007.5h0M191.5 1008.5h0M192.5 1007.5h0M192.5 1007.5h0M193.5 1007.5h0M193.5 1007.5h0M194.5 1007.5h0M194.5 1007.5h0M195.5 1007.5h0M195.5 1007.5h0M196.5 1007.5h0M196.5 1008.5h0M197.5 1007.5h0M197.5 1007.5h0M198.5 1007.5h0M199.5 1007.5h0M199.5 1007.5h0M200.5 1007.5h0M200.5 1007.5h0M201.5 1007.5h0M201.5 1008.5h0M202.5 1007.5h0M202.5 1007.5h0M203.5 1007.5h0M203.5 1007.5h0M204.5 1008.5h0M204.5 1007.5h0M205.5 1007.5h0M205.5 1007.5h0M206.5 1007.5h0M206.5 1007.5h0M207.5 1007.5h0M207.5 1007.5h0M208.5 1007.5h0M208.5 1007.5h0M209.5 1007.5h0M209.5 1007.5h0M210.5 1007.5h0M210.5 1007.5h0M211.5 1007.5h0M212.5 1007.5h0M212.5 1007.5h0M213.5 1007.5h0M213.5 1008.5h0M214.5 1007.5h0M214.5 1007.5h0M215.5 1007.5h0M215.5 1007.5h0M216.5 1007.5h0M216.5 1007.5h0M217.5 1007.5h0M217.5 1007.5h0M218.5 1007.5h0M218.5 1007.5h0M219.5 1007.5h0M219.5 1007.5h0M220.5 1007.5h0M220.5 1007.5h0M221.5 1007.5h0M221.5 1007.5h0M222.5 1007.5h0M222.5 1007.5h0M223.5 1008.5h0M223.5 1007.5h0M224.5 1007.5h0M225.5 1008.5h0M225.5 1007.5h0M226.5 1007.5h0M226.5 1007.5h0M227.5 1007.5h0M227.5 1007.5h0M228.5 1007.5h0M228.5 1007.5h0M229.5 1007.5h0M229.5 1007.5h0M230.5 1007.5h0M230.5 1007.5h0M231.5 1007.5h0M231.5 1007.5h0M232.5 1007.5h0M232.5 1007.5h0M233.5 1007.5h0M233.5 1007.5h0M234.5 1007.5h0M234.5 1007.5h0M235.5 1007.5h0M235.5 1007.5h0M236.5 1007.5h0M236.5 1007.5h0M237.5 1007.5h0M238.5 1007.5h0M238.5 1007.5h0M239.5 1006.5h0M239.5 1006.5h0M240.5 1007.5h0M240.5 1003.5h0M241.5 1004.5h0M241.5 1004.5h0M242.5 1004.5h0M242.5 1004.5h0M243.5 1004.5h0M243.5 1004.5h0M244.5 1004.5h0M244.5 1005.5h0M245.5 1004.5h0M245.5 1005.5h0M246.5 1004.5h0M246.5 1004.5h0M247.5 1005.5h0M247.5 1005.5h0M248.5 1004.5h0M248.5 1005.5h0M249.5 1004.5h0M249.5 1005.5h0M250.5 1004.5h0M251.5 1005.5h0M251.5 1004.5h0M252.5 1004.5h0M252.5 1005.5h0M253.5 1005.5h0M253.5 1005.5h0M254.5 1005.5h0M254.5 1005.5h0M255.5 1005.5h0M255.5 1005.5h0M256.5 1005.5h0M256.5 1005.5h0M257.5 1004.5h0M257.5 1005.5h0M258.5 1005.5h0M258.5 1004.5h0M259.5 1005.5h0M259.5 1004.5h0M260.5 1004.5h0M260.5 1005.5h0M261.5 1004.5h0M261.5 1004.5h0M262.5 1005.5h0M262.5 1004.5h0M263.5 1004.5h0M264.5 1004.5h0M264.5 1004.5h0M265.5 1004.5h0M265.5 1008.5h0M266.5 1008.5h0M266.5 1008.5h0M267.5 1008.5h0M267.5 1008.5h0M268.5 1008.5h0M268.5 1008.5h0M269.5 1008.5h0M269.5 1008.5h0M270.5 1008.5h0M270.5 1008.5h0M271.5 1008.5h0M271.5 1008.5h0M272.5 1008.5h0M272.5 1008.5h0M273.5 1008.5h0M273.5 1008.5h0M274.5 1008.5h0M274.5 1008.5h0M275.5 1008.5h0M275.5 1008.5h0M276.5 1008.5h0M277.5 1008.5h0M277.5 1008.5h0M278.5 1008.5h0M278.5 1008.5h0M279.5 1008.5h0M279.5 1008.5h0M280.5 1008.5h0M280.5 1008.5h0M281.5 1009.5h0M281.5 1008.5h0M282.5 1008.5h0M282.5 1008.5h0M283.5 1008.5h0M283.5 1008.5h0M284.5 1008.5h0M284.5 1007.5h0M285.5 1008.5h0M285.5 1008.5h0M286.5 1008.5h0M286.5 1008.5h0M287.5 1008.5h0M287.5 1008.5h0M288.5 1008.5h0M288.5 1008.5h0M289.5 1008.5h0M290.5 1008.5h0M290.5 1008.5h0M291.5 1008.5h0M291.5 1008.5h0M292.5 1007.5h0M292.5 1007.5h0M293.5 1008.5h0M293.5 1008.5h0M294.5 1008.5h0M294.5 1008.5h0M295.5 1008.5h0M295.5 1007.5h0M296.5 1008.5h0M296.5 1008.5h0M297.5 1007.5h0M297.5 1007.5h0M298.5 1008.5h0M298.5 1008.5h0M299.5 1007.5h0M299.5 1007.5h0M300.5 1008.5h0M300.5 1007.5h0M301.5 1007.5h0M301.5 1007.5h0M302.5 1007.5h0M303.5 1008.5h0M303.5 1007.5h0M304.5 1007.5h0M304.5 1007.5h0M305.5 1007.5h0M305.5 1007.5h0M306.5 1007.5h0M306.5 1007.5h0M307.5 1007.5h0M307.5 1007.5h0M308.5 1007.5h0M308.5 1008.5h0M309.5 1007.5h0M309.5 1007.5h0M310.5 1007.5h0M310.5 1007.5h0M311.5 1008.5h0M311.5 1007.5h0M312.5 1007.5h0M312.5 1007.5h0M313.5 1008.5h0M313.5 1007.5h0M314.5 1008.5h0M314.5 1008.5h0M315.5 1007.5h0M316.5 1007.5h0M316.5 1007.5h0M317.5 1007.5h0M317.5 1007.5h0M318.5 1007.5h0M318.5 1007.5h0M319.5 1007.5h0M319.5 1008.5h0M320.5 1008.5h0M320.5 1007.5h0M321.5 1007.5h0M321.5 1007.5h0M322.5 1007.5h0M322.5 1007.5h0M323.5 1007.5h0M323.5 1007.5h0M324.5 1007.5h0M324.5 1007.5h0M325.5 1007.5h0M325.5 1007.5h0M326.5 1007.5h0M326.5 1007.5h0M327.5 1007.5h0M327.5 1007.5h0M328.5 1007.5h0M329.5 1007.5h0M329.5 1007.5h0M330.5 1007.5h0M330.5 1007.5h0M331.5 1007.5h0M331.5 1007.5h0M332.5 1007.5h0M332.5 1007.5h0M333.5 1007.5h0M333.5 1007.5h0M334.5 1008.5h0M334.5 1007.5h0M335.5 1007.5h0M335.5 1007.5h0M336.5 1007.5h0M336.5 1007.5h0M337.5 1007.5h0M337.5 1007.5h0M338.5 1007.5h0M338.5 1007.5h0M339.5 1007.5h0M339.5 1008.5h0M340.5 1007.5h0M340.5 1007.5h0M341.5 1007.5h0M342.5 1007.5h0M342.5 1007.5h0M343.5 1007.5h0M343.5 1007.5h0M344.5 1006.5h0M344.5 1007.5h0M345.5 1007.5h0M345.5 1007.5h0M346.5 1007.5h0M346.5 1007.5h0M347.5 1007.5h0M347.5 1007.5h0M348.5 1007.5h0M348.5 1007.5h0M349.5 1006.5h0M349.5 1007.5h0M350.5 1006.5h0M350.5 1007.5h0M351.5 1007.5h0M351.5 1006.5h0M352.5 1007.5h0M352.5 1006.5h0M353.5 1007.5h0M353.5 1007.5h0M354.5 1007.5h0M355.5 1007.5h0M355.5 1008.5h0M356.5 1008.5h0M356.5 1007.5h0M357.5 1008.5h0M357.5 1008.5h0M358.5 1008.5h0M358.5 1008.5h0M359.5 1008.5h0M359.5 1008.5h0M360.5 1008.5h0M360.5 1008.5h0M361.5 1008.5h0M361.5 1008.5h0M362.5 1008.5h0M362.5 1008.5h0M363.5 1008.5h0M363.5 1008.5h0M364.5 1008.5h0M364.5 1008.5h0M365.5 1008.5h0M365.5 1008.5h0M366.5 1008.5h0M366.5 1008.5h0M367.5 1008.5h0M368.5 1008.5h0M368.5 1008.5h0M369.5 1008.5h0M369.5 1008.5h0M370.5 1007.5h0M370.5 1007.5h0M371.5 1007.5h0M371.5 1008.5h0M372.5 1008.5h0M372.5 1008.5h0M373.5 1008.5h0M373.5 1008.5h0M374.5 1008.5h0M374.5 1008.5h0M375.5 1008.5h0M375.5 1007.5h0M376.5 1008.5h0M376.5 1008.5h0M377.5 1007.5h0M377.5 1007.5h0M378.5 1008.5h0M378.5 1007.5h0M379.5 1007.5h0M379.5 1008.5h0M380.5 1007.5h0M381.5 1007.5h0M381.5 1007.5h0M382.5 1007.5h0M382.5 1007.5h0M383.5 1008.5h0M383.5 1007.5h0M384.5 1007.5h0M384.5 1007.5h0M385.5 1007.5h0M385.5 1007.5h0M386.5 1007.5h0M386.5 1007.5h0M387.5 1008.5h0M387.5 1008.5h0M388.5 1007.5h0M388.5 1007.5h0M389.5 1007.5h0M389.5 1007.5h0M390.5 1007.5h0M390.5 1007.5h0M391.5 1007.5h0M391.5 1007.5h0M392.5 1007.5h0M392.5 1007.5h0M393.5 1007.5h0M394.5 1007.5h0M394.5 1007.5h0M395.5 1007.5h0M395.5 1007.5h0M396.5 1007.5h0M396.5 1007.5h0M397.5 1007.5h0M397.5 1008.5h0M398.5 1007.5h0M398.5 1007.5h0M399.5 1007.5h0M399.5 1007.5h0M400.5 1007.5h0M400.5 1007.5h0M401.5 1007.5h0M401.5 1007.5h0M402.5 1007.5h0M402.5 1007.5h0M403.5 1007.5h0M403.5 1007.5h0M404.5 1007.5h0M404.5 1006.5h0M405.5 1007.5h0M405.5 1007.5h0M406.5 1007.5h0M407.5 1007.5h0M407.5 1007.5h0M408.5 1007.5h0M408.5 1007.5h0M409.5 1007.5h0M409.5 1008.5h0M410.5 1007.5h0M410.5 1007.5h0M411.5 1007.5h0M411.5 1007.5h0M412.5 1007.5h0M412.5 1006.5h0M413.5 1007.5h0M413.5 1007.5h0M414.5 1007.5h0M414.5 1007.5h0M415.5 1007.5h0M415.5 1007.5h0M416.5 1007.5h0M416.5 1007.5h0M417.5 1007.5h0M417.5 1007.5h0M418.5 1007.5h0M418.5 1007.5h0M419.5 1007.5h0M420.5 1007.5h0M420.5 1007.5h0M421.5 1007.5h0M421.5 1007.5h0M422.5 1006.5h0M422.5 1007.5h0M423.5 1007.5h0M423.5 1007.5h0M424.5 1007.5h0M424.5 1006.5h0M425.5 1006.5h0M425.5 1007.5h0M426.5 1006.5h0M426.5 1007.5h0M427.5 1006.5h0M427.5 1006.5h0M428.5 1007.5h0M428.5 1006.5h0M429.5 1006.5h0M429.5 1006.5h0M430.5 1007.5h0M430.5 1006.5h0M431.5 1006.5h0M431.5 1007.5h0M432.5 1007.5h0M433.5 1006.5h0M433.5 1007.5h0M434.5 1007.5h0M434.5 1007.5h0M435.5 1007.5h0M435.5 1007.5h0M436.5 1007.5h0M436.5 1006.5h0M437.5 1006.5h0M437.5 1006.5h0M438.5 1006.5h0M438.5 1007.5h0M439.5 1006.5h0M439.5 1006.5h0M440.5 1008.5h0M440.5 1008.5h0M441.5 1007.5h0M441.5 1007.5h0M442.5 1007.5h0M442.5 1007.5h0M443.5 1008.5h0M443.5 1008.5h0M444.5 1008.5h0M444.5 1008.5h0M445.5 1007.5h0M446.5 1007.5h0M446.5 1007.5h0M447.5 1008.5h0M447.5 1008.5h0M448.5 1008.5h0M448.5 1008.5h0M449.5 1007.5h0M449.5 1007.5h0M450.5 1008.5h0M450.5 1007.5h0M451.5 1007.5h0M451.5 1008.5h0M452.5 1007.5h0M452.5 1008.5h0M453.5 1007.5h0M453.5 1007.5h0M454.5 1007.5h0M454.5 1007.5h0M455.5 1007.5h0M455.5 1007.5h0M456.5 1007.5h0M456.5 1007.5h0M457.5 1008.5h0M457.5 1007.5h0M458.5 1008.5h0M459.5 1008.5h0M459.5 1007.5h0M460.5 1007.5h0M460.5 1007.5h0M461.5 1007.5h0M461.5 1007.5h0M462.5 1008.5h0M462.5 1007.5h0M463.5 1007.5h0M463.5 1007.5h0M464.5 1007.5h0M464.5 1007.5h0M465.5 1007.5h0M465.5 1007.5h0M466.5 1007.5h0M466.5 1007.5h0M467.5 1007.5h0M467.5 1008.5h0M468.5 1007.5h0M468.5 1007.5h0M469.5 996.5h0M469.5 1007.5h0M470.5 1007.5h0M470.5 1007.5h0M471.5 1007.5h0M472.5 1007.5h0M472.5 1007.5h0M473.5 1007.5h0M473.5 1007.5h0M474.5 1007.5h0M474.5 1007.5h0M475.5 1008.5h0M475.5 1007.5h0M476.5 1007.5h0M476.5 1007.5h0M477.5 1007.5h0M477.5 1007.5h0M478.5 1007.5h0M478.5 1007.5h0M479.5 1007.5h0M479.5 1008.5h0M480.5 1007.5h0M480.5 1007.5h0M481.5 1007.5h0M481.5 1007.5h0M482.5 1007.5h0M482.5 1007.5h0M483.5 1007.5h0M483.5 1007.5h0M484.5 1007.5h0M485.5 1007.5h0M485.5 1007.5h0M486.5 1007.5h0M486.5 1007.5h0M487.5 1007.5h0M487.5 1007.5h0M488.5 1007.5h0M488.5 1007.5h0M489.5 1008.5h0M489.5 1007.5h0M490.5 1007.5h0M490.5 1007.5h0M491.5 1008.5h0M491.5 1008.5h0M492.5 1007.5h0M492.5 1008.5h0M493.5 1008.5h0M493.5 1008.5h0M494.5 1007.5h0M494.5 1008.5h0M495.5 1007.5h0M495.5 1007.5h0M496.5 1007.5h0M496.5 1007.5h0M497.5 1007.5h0M498.5 1008.5h0M498.5 1007.5h0M499.5 1007.5h0M499.5 1008.5h0M500.5 1007.5h0M500.5 1007.5h0M501.5 1007.5h0M501.5 1007.5h0M502.5 1007.5h0M502.5 1007.5h0M503.5 1007.5h0M503.5 1007.5h0M504.5 1007.5h0M504.5 1007.5h0M505.5 1007.5h0M505.5 1007.5h0M506.5 1007.5h0M506.5 1007.5h0M507.5 1007.5h0M507.5 1007.5h0M508.5 1004.5h0M508.5 1004.5h0M509.5 1005.5h0M509.5 1005.5h0M510.5 1005.5h0M511.5 1005.5h0M511.5 1005.5h0M512.5 1005.5h0M512.5 1005.5h0M513.5 1005.5h0M513.5 1005.5h0M514.5 1005.5h0M514.5 1005.5h0M515.5 1005.5h0M515.5 1005.5h0M516.5 1005.5h0M516.5 1005.5h0M517.5 1005.5h0M517.5 1005.5h0M518.5 1005.5h0M518.5 1006.5h0M519.5 1005.5h0M519.5 1005.5h0M520.5 1004.5h0M520.5 1005.5h0M521.5 1005.5h0M521.5 1005.5h0M522.5 1005.5h0M522.5 1005.5h0M523.5 1005.5h0M524.5 1005.5h0M524.5 1005.5h0M525.5 1005.5h0M525.5 1005.5h0M526.5 1005.5h0M526.5 1005.5h0M527.5 1004.5h0M527.5 1005.5h0M528.5 1005.5h0M528.5 1005.5h0M529.5 1005.5h0M529.5 1005.5h0M530.5 1005.5h0M530.5 1005.5h0M531.5 1005.5h0M531.5 1005.5h0M532.5 1005.5h0M532.5 1005.5h0M533.5 1004.5h0M533.5 1004.5h0M534.5 1008.5h0M534.5 1007.5h0M535.5 1008.5h0M535.5 1008.5h0M536.5 1007.5h0M537.5 1008.5h0M537.5 1008.5h0M538.5 1007.5h0M538.5 1008.5h0M539.5 1008.5h0M539.5 1008.5h0M540.5 1007.5h0M540.5 1008.5h0M541.5 1008.5h0M541.5 1008.5h0M542.5 1008.5h0M542.5 1008.5h0M543.5 1008.5h0M543.5 1007.5h0M544.5 1008.5h0M544.5 1008.5h0M545.5 1008.5h0M545.5 1007.5h0M546.5 1007.5h0M546.5 1007.5h0M547.5 1007.5h0M547.5 1007.5h0M548.5 1007.5h0M548.5 1007.5h0M549.5 1007.5h0M550.5 1007.5h0M550.5 1007.5h0M551.5 1007.5h0M551.5 1007.5h0M552.5 1007.5h0M552.5 1007.5h0M553.5 1007.5h0M553.5 1007.5h0M554.5 1007.5h0M554.5 1007.5h0M555.5 1007.5h0M555.5 1007.5h0M556.5 1008.5h0M556.5 1007.5h0M557.5 1008.5h0M557.5 1007.5h0M558.5 1006.5h0M558.5 1007.5h0M559.5 1007.5h0M559.5 1007.5h0M560.5 1007.5h0M560.5 1007.5h0M561.5 1007.5h0M561.5 1007.5h0M562.5 1007.5h0M563.5 1006.5h0M563.5 1006.5h0M564.5 1007.5h0M564.5 1007.5h0M565.5 1007.5h0M565.5 1007.5h0M566.5 1007.5h0M566.5 1007.5h0M567.5 1007.5h0M567.5 1006.5h0M568.5 1007.5h0M568.5 1007.5h0M569.5 1007.5h0M569.5 1007.5h0M570.5 1007.5h0M570.5 1007.5h0M571.5 1007.5h0M571.5 1006.5h0M572.5 1007.5h0M572.5 1007.5h0M573.5 1007.5h0M573.5 1007.5h0M574.5 1007.5h0M574.5 1007.5h0M575.5 1007.5h0M576.5 1007.5h0M576.5 1006.5h0M577.5 1007.5h0M577.5 1007.5h0M578.5 1006.5h0M578.5 1007.5h0M579.5 1007.5h0M579.5 1007.5h0M580.5 1007.5h0M580.5 1007.5h0M581.5 1007.5h0M581.5 1007.5h0M582.5 1007.5h0M582.5 1007.5h0M583.5 1007.5h0M583.5 1006.5h0M584.5 1007.5h0M584.5 1007.5h0M585.5 1007.5h0M585.5 1007.5h0M586.5 1007.5h0M586.5 1006.5h0M587.5 1007.5h0M587.5 1007.5h0M588.5 1007.5h0M589.5 1007.5h0M589.5 1006.5h0M590.5 1006.5h0M590.5 1006.5h0M591.5 1006.5h0M591.5 1006.5h0M592.5 1006.5h0M592.5 1007.5h0M593.5 1006.5h0M593.5 1006.5h0M594.5 1006.5h0M594.5 1006.5h0M595.5 1006.5h0M595.5 1006.5h0M596.5 1006.5h0M596.5 1006.5h0M597.5 1006.5h0M597.5 1006.5h0M598.5 1007.5h0M598.5 1006.5h0M599.5 1007.5h0M599.5 1007.5h0M600.5 1006.5h0M600.5 1006.5h0M601.5 1007.5h0M602.5 1007.5h0M602.5 1006.5h0M603.5 1006.5h0M603.5 1006.5h0M604.5 1006.5h0M604.5 1007.5h0M605.5 1006.5h0M605.5 1007.5h0M606.5 1007.5h0M606.5 1006.5h0M607.5 1006.5h0M607.5 1007.5h0M608.5 1007.5h0M608.5 1006.5h0M609.5 1007.5h0M609.5 1006.5h0M610.5 1006.5h0M610.5 1006.5h0M611.5 1006.5h0M611.5 1006.5h0M612.5 1006.5h0M612.5 1006.5h0M613.5 1006.5h0M613.5 1006.5h0M614.5 1006.5h0M615.5 1006.5h0M615.5 1006.5h0M616.5 1006.5h0M616.5 1006.5h0M617.5 1006.5h0M617.5 1006.5h0M618.5 1006.5h0M618.5 1006.5h0M619.5 1006.5h0M619.5 1006.5h0M620.5 1006.5h0M620.5 1006.5h0M621.5 1006.5h0M621.5 1006.5h0M622.5 1008.5h0M622.5 1008.5h0M623.5 1008.5h0M623.5 1008.5h0M624.5 1008.5h0M624.5 1008.5h0M625.5 1008.5h0M625.5 1008.5h0M626.5 1008.5h0M627.5 1008.5h0M627.5 1008.5h0M628.5 1008.5h0M628.5 1008.5h0M629.5 1008.5h0M629.5 1008.5h0M630.5 1008.5h0M630.5 1008.5h0M631.5 1008.5h0M631.5 1008.5h0M632.5 1008.5h0M632.5 1008.5h0M633.5 1008.5h0M633.5 1008.5h0M634.5 1008.5h0M634.5 1008.5h0M635.5 1008.5h0M635.5 1008.5h0M636.5 1008.5h0M636.5 1008.5h0M637.5 1008.5h0M637.5 1008.5h0M638.5 1008.5h0M638.5 1007.5h0M639.5 1008.5h0M640.5 1007.5h0M640.5 1007.5h0M641.5 1008.5h0M641.5 1008.5h0M642.5 1008.5h0M642.5 1008.5h0M643.5 1007.5h0M643.5 1008.5h0M644.5 1007.5h0M644.5 1008.5h0M645.5 1007.5h0M645.5 1008.5h0M646.5 1007.5h0M646.5 1008.5h0M647.5 1008.5h0M647.5 1007.5h0M648.5 1007.5h0M648.5 1007.5h0M649.5 1008.5h0M649.5 1007.5h0M650.5 1008.5h0M650.5 1008.5h0M651.5 1007.5h0M651.5 1008.5h0M652.5 1007.5h0M653.5 1007.5h0M653.5 1007.5h0M654.5 1007.5h0M654.5 1007.5h0M655.5 1007.5h0M655.5 1007.5h0M656.5 1008.5h0M656.5 1007.5h0M657.5 1007.5h0M657.5 1007.5h0M658.5 1007.5h0M658.5 1007.5h0M659.5 1008.5h0M659.5 1007.5h0M660.5 1007.5h0M660.5 1007.5h0M661.5 1008.5h0M661.5 1007.5h0M662.5 1008.5h0M662.5 1007.5h0M663.5 1007.5h0M663.5 1007.5h0M664.5 1007.5h0M664.5 1008.5h0M665.5 1007.5h0M666.5 1007.5h0M666.5 1007.5h0M667.5 1007.5h0M667.5 1007.5h0M668.5 1007.5h0M668.5 1008.5h0M669.5 1007.5h0M669.5 1007.5h0M670.5 1007.5h0M670.5 1007.5h0M671.5 1007.5h0M671.5 1007.5h0M672.5 1007.5h0M672.5 1007.5h0M673.5 1007.5h0M673.5 1007.5h0M674.5 1007.5h0M674.5 1007.5h0M675.5 1007.5h0M675.5 1007.5h0M676.5 1007.5h0M676.5 1007.5h0M677.5 1007.5h0M677.5 1007.5h0M678.5 1007.5h0M679.5 1007.5h0M679.5 1007.5h0M680.5 1007.5h0M680.5 1007.5h0M681.5 1007.5h0M681.5 1007.5h0M682.5 1008.5h0M682.5 1007.5h0M683.5 1007.5h0M683.5 1007.5h0M684.5 1007.5h0M684.5 1007.5h0M685.5 1007.5h0M685.5 1007.5h0M686.5 1007.5h0M686.5 1007.5h0M687.5 1005.5h0M687.5 1005.5h0M688.5 1005.5h0M688.5 1005.5h0M689.5 1006.5h0M689.5 1006.5h0M690.5 1005.5h0M690.5 1005.5h0M691.5 1005.5h0M692.5 1005.5h0M692.5 1005.5h0M693.5 1005.5h0M693.5 1006.5h0M694.5 1006.5h0M694.5 1006.5h0M695.5 1005.5h0M695.5 1006.5h0M696.5 1006.5h0M696.5 1006.5h0M697.5 1005.5h0M697.5 1006.5h0M698.5 1005.5h0M698.5 1005.5h0M699.5 1005.5h0M699.5 1005.5h0M700.5 1006.5h0M700.5 1006.5h0M701.5 1006.5h0M701.5 1006.5h0M702.5 1005.5h0M702.5 1005.5h0M703.5 1005.5h0M703.5 1005.5h0M704.5 1006.5h0M705.5 1005.5h0M705.5 1006.5h0M706.5 1005.5h0M706.5 1005.5h0M707.5 1005.5h0M707.5 1005.5h0M708.5 1005.5h0M708.5 1006.5h0M709.5 1006.5h0M709.5 1006.5h0M710.5 1006.5h0M710.5 1006.5h0M711.5 1005.5h0M711.5 1006.5h0M712.5 1005.5h0M712.5 1005.5h0M713.5 1005.5h0M713.5 1004.5h0M714.5 1007.5h0M714.5 1007.5h0M715.5 1007.5h0M715.5 1007.5h0M716.5 1007.5h0M716.5 1007.5h0M717.5 1007.5h0M718.5 1007.5h0M718.5 1007.5h0M719.5 1007.5h0M719.5 1007.5h0M720.5 1007.5h0M720.5 1007.5h0M721.5 1007.5h0M721.5 1007.5h0M722.5 1007.5h0M722.5 1007.5h0M723.5 1008.5h0M723.5 1007.5h0M724.5 1007.5h0M724.5 1008.5h0M725.5 1007.5h0M725.5 1007.5h0M726.5 1007.5h0M726.5 1007.5h0M727.5 1007.5h0M727.5 1007.5h0M728.5 1007.5h0M728.5 1007.5h0M729.5 1007.5h0M729.5 1007.5h0M730.5 1008.5h0M731.5 1007.5h0M731.5 1007.5h0M732.5 1007.5h0M732.5 1007.5h0M733.5 1008.5h0M733.5 1007.5h0M734.5 1007.5h0M734.5 1007.5h0M735.5 1007.5h0M735.5 1007.5h0M736.5 1007.5h0M736.5 1007.5h0M737.5 1007.5h0M737.5 1007.5h0M738.5 1007.5h0M738.5 1008.5h0M739.5 1008.5h0M739.5 1007.5h0M740.5 1008.5h0M740.5 1008.5h0M741.5 1007.5h0M741.5 1007.5h0M742.5 1007.5h0M742.5 1007.5h0M743.5 1007.5h0M744.5 1007.5h0M744.5 1007.5h0M745.5 1007.5h0M745.5 1007.5h0M746.5 1007.5h0M746.5 1007.5h0M747.5 1007.5h0M747.5 1008.5h0M748.5 1007.5h0M748.5 1007.5h0M749.5 1007.5h0M749.5 1007.5h0M750.5 1008.5h0M750.5 1008.5h0M751.5 1007.5h0M751.5 1007.5h0M752.5 1008.5h0M752.5 1008.5h0M753.5 1007.5h0M753.5 1007.5h0M754.5 1008.5h0M754.5 1008.5h0M755.5 1007.5h0M755.5 1007.5h0M756.5 1008.5h0M757.5 1008.5h0M757.5 1007.5h0M758.5 1007.5h0M758.5 1007.5h0M759.5 1007.5h0M759.5 1007.5h0M760.5 1007.5h0M760.5 1008.5h0M761.5 1007.5h0M761.5 1007.5h0M762.5 1007.5h0M762.5 1007.5h0M763.5 1007.5h0M763.5 1007.5h0M764.5 1007.5h0M764.5 1007.5h0M765.5 1007.5h0M765.5 1007.5h0M766.5 1007.5h0M766.5 1007.5h0M767.5 1007.5h0M767.5 1008.5h0M768.5 1007.5h0M768.5 1008.5h0M769.5 1007.5h0M770.5 1007.5h0M770.5 1008.5h0M771.5 1007.5h0M771.5 1007.5h0M772.5 1007.5h0M772.5 1008.5h0M773.5 1007.5h0M773.5 1007.5h0M774.5 1008.5h0M774.5 1007.5h0M775.5 1007.5h0M775.5 1007.5h0M776.5 1007.5h0M776.5 1007.5h0M777.5 1004.5h0M777.5 1005.5h0M778.5 1005.5h0M778.5 1006.5h0M779.5 1006.5h0M779.5 1006.5h0M780.5 1006.5h0M780.5 1006.5h0M781.5 1006.5h0M781.5 1006.5h0M782.5 1006.5h0M783.5 1006.5h0M783.5 1006.5h0M784.5 1006.5h0M784.5 1006.5h0M785.5 1006.5h0M785.5 1006.5h0M786.5 1006.5h0M786.5 1006.5h0M787.5 1006.5h0M787.5 1006.5h0M788.5 1006.5h0M788.5 1006.5h0M789.5 1006.5h0M789.5 1006.5h0M790.5 1006.5h0M790.5 1005.5h0M791.5 1005.5h0M791.5 1006.5h0M792.5 1006.5h0M792.5 1006.5h0M793.5 1006.5h0M793.5 1006.5h0M794.5 1005.5h0M794.5 1006.5h0M795.5 1006.5h0M796.5 1006.5h0M796.5 1006.5h0M797.5 1006.5h0M797.5 1006.5h0M798.5 1006.5h0M798.5 1005.5h0M799.5 1006.5h0M799.5 1005.5h0M800.5 1006.5h0M800.5 1005.5h0M801.5 1005.5h0M801.5 1005.5h0M802.5 1008.5h0M802.5 1008.5h0M803.5 1008.5h0M803.5 1008.5h0M804.5 1008.5h0M804.5 1007.5h0M805.5 1007.5h0M805.5 1008.5h0M806.5 1007.5h0M806.5 1007.5h0M807.5 1007.5h0M807.5 1008.5h0M808.5 1007.5h0M809.5 1007.5h0M809.5 1007.5h0M810.5 1008.5h0M810.5 1008.5h0M811.5 1008.5h0M811.5 1008.5h0M812.5 1008.5h0M812.5 1008.5h0M813.5 1008.5h0M813.5 1007.5h0M814.5 1007.5h0M814.5 1007.5h0M815.5 1008.5h0M815.5 1008.5h0M816.5 1007.5h0M816.5 1008.5h0M817.5 1008.5h0M817.5 1008.5h0M818.5 1008.5h0M818.5 1007.5h0M819.5 1007.5h0M819.5 1007.5h0M820.5 1007.5h0M820.5 1007.5h0M821.5 1007.5h0M822.5 1007.5h0M822.5 1007.5h0M823.5 1007.5h0M823.5 1008.5h0M824.5 1007.5h0M824.5 1007.5h0M825.5 1008.5h0M825.5 1007.5h0M826.5 1007.5h0M826.5 1007.5h0M827.5 1007.5h0M827.5 1007.5h0M828.5 1007.5h0M828.5 1007.5h0M829.5 1007.5h0M829.5 1007.5h0M830.5 1006.5h0M830.5 1007.5h0M831.5 1007.5h0M831.5 1007.5h0M832.5 1007.5h0M832.5 1007.5h0M833.5 1007.5h0M833.5 1007.5h0M834.5 1007.5h0M835.5 1007.5h0M835.5 1007.5h0M836.5 1007.5h0M836.5 1007.5h0M837.5 1007.5h0M837.5 1007.5h0M838.5 1007.5h0M838.5 1007.5h0M839.5 1007.5h0M839.5 1007.5h0M840.5 1007.5h0M840.5 1007.5h0M841.5 1007.5h0M841.5 1007.5h0M842.5 1007.5h0M842.5 1007.5h0M843.5 1007.5h0M843.5 1007.5h0M844.5 1007.5h0M844.5 1007.5h0M845.5 1007.5h0M845.5 1006.5h0M846.5 1006.5h0M846.5 1006.5h0M847.5 1008.5h0M848.5 1007.5h0M848.5 1007.5h0M849.5 1007.5h0M849.5 1007.5h0M850.5 1007.5h0M850.5 1006.5h0M851.5 1007.5h0M851.5 1007.5h0M852.5 1007.5h0M852.5 1006.5h0M853.5 1006.5h0M853.5 1006.5h0M854.5 1006.5h0M854.5 1007.5h0M855.5 1006.5h0M855.5 1006.5h0M856.5 1007.5h0M856.5 1007.5h0M857.5 1007.5h0M857.5 1007.5h0M858.5 1007.5h0M858.5 1007.5h0M859.5 1006.5h0M859.5 1007.5h0M860.5 1007.5h0M861.5 1007.5h0M861.5 1007.5h0M862.5 1006.5h0M862.5 1006.5h0M863.5 1006.5h0M863.5 1006.5h0M864.5 1007.5h0M864.5 1006.5h0M865.5 1006.5h0M865.5 1006.5h0M866.5 1006.5h0M866.5 1006.5h0M867.5 1006.5h0M867.5 1006.5h0M868.5 1006.5h0M868.5 1006.5h0M869.5 1006.5h0M869.5 1006.5h0M870.5 1007.5h0M870.5 1006.5h0M871.5 1006.5h0M871.5 1006.5h0M872.5 1007.5h0M872.5 1007.5h0M873.5 1006.5h0M874.5 1006.5h0M874.5 1006.5h0M875.5 1006.5h0M875.5 1007.5h0M876.5 1006.5h0M876.5 1007.5h0M877.5 1006.5h0M877.5 1006.5h0M878.5 1006.5h0M878.5 1007.5h0M879.5 1006.5h0M879.5 1006.5h0M880.5 1005.5h0M880.5 1006.5h0M881.5 1006.5h0M881.5 1006.5h0M882.5 1006.5h0M882.5 1005.5h0M883.5 1006.5h0M883.5 1006.5h0M884.5 1006.5h0M884.5 1006.5h0M885.5 1006.5h0M885.5 1006.5h0M886.5 1006.5h0M887.5 1006.5h0M887.5 1006.5h0M888.5 1005.5h0M888.5 1006.5h0M889.5 1006.5h0M889.5 1006.5h0M890.5 1006.5h0M890.5 1006.5h0M891.5 1006.5h0M891.5 1005.5h0M892.5 1006.5h0M892.5 1008.5h0M893.5 1008.5h0M893.5 1008.5h0M894.5 1008.5h0M894.5 1008.5h0M895.5 1008.5h0M895.5 1008.5h0M896.5 1008.5h0M896.5 1008.5h0M897.5 1008.5h0M897.5 1009.5h0M898.5 1008.5h0M898.5 1008.5h0M899.5 1008.5h0M900.5 1008.5h0M900.5 1008.5h0M901.5 1008.5h0M901.5 1008.5h0M902.5 1008.5h0M902.5 1009.5h0M903.5 1008.5h0M903.5 1008.5h0M904.5 1008.5h0M904.5 1008.5h0M905.5 1008.5h0M905.5 1008.5h0M906.5 1008.5h0M906.5 1008.5h0M907.5 1008.5h0M907.5 1008.5h0M908.5 1008.5h0M908.5 1008.5h0M909.5 1008.5h0M909.5 1008.5h0M910.5 1008.5h0M910.5 1008.5h0M911.5 1008.5h0M911.5 1007.5h0M912.5 1007.5h0M913.5 1008.5h0M913.5 1008.5h0M914.5 1008.5h0M914.5 1008.5h0M915.5 1008.5h0M915.5 1008.5h0M916.5 1008.5h0M916.5 1008.5h0M917.5 1007.5h0M917.5 1008.5h0M918.5 1007.5h0M918.5 1008.5h0M919.5 1008.5h0M919.5 1007.5h0M920.5 1008.5h0M920.5 1007.5h0M921.5 1007.5h0M921.5 1008.5h0M922.5 1007.5h0M922.5 1008.5h0M923.5 1007.5h0M923.5 1007.5h0M924.5 1008.5h0M924.5 1007.5h0M925.5 1007.5h0M926.5 1008.5h0M926.5 1007.5h0M927.5 1007.5h0M927.5 1008.5h0M928.5 1007.5h0M928.5 1007.5h0M929.5 1008.5h0M929.5 1008.5h0M930.5 1008.5h0M930.5 1007.5h0M931.5 1008.5h0M931.5 1008.5h0M932.5 1008.5h0M932.5 1008.5h0M933.5 1007.5h0M933.5 1007.5h0M934.5 1008.5h0M934.5 1008.5h0M935.5 1007.5h0M935.5 1008.5h0M936.5 1007.5h0M936.5 1007.5h0M937.5 1008.5h0M937.5 1007.5h0M938.5 1007.5h0M939.5 1008.5h0M939.5 1008.5h0M940.5 1007.5h0M940.5 1008.5h0M941.5 1007.5h0M941.5 1007.5h0M942.5 1007.5h0M942.5 1008.5h0M943.5 1008.5h0M943.5 1006.5h0M944.5 1006.5h0M944.5 1007.5h0M945.5 1007.5h0M945.5 1006.5h0M946.5 1007.5h0M946.5 1007.5h0M947.5 1007.5h0M947.5 1006.5h0M948.5 1007.5h0M948.5 1007.5h0M949.5 1006.5h0M949.5 1007.5h0M950.5 1007.5h0M950.5 1007.5h0M951.5 1007.5h0M952.5 1007.5h0M952.5 1007.5h0M953.5 1007.5h0M953.5 1006.5h0M954.5 1007.5h0M954.5 1006.5h0M955.5 1006.5h0M955.5 1006.5h0M956.5 1006.5h0M956.5 1007.5h0M957.5 1007.5h0M957.5 1006.5h0M958.5 1007.5h0M958.5 1007.5h0M959.5 1007.5h0M959.5 1007.5h0M960.5 1006.5h0M960.5 1006.5h0M961.5 1006.5h0M961.5 1007.5h0M962.5 1007.5h0M962.5 1006.5h0M963.5 1006.5h0M963.5 1006.5h0M964.5 1006.5h0M965.5 1007.5h0M965.5 1006.5h0M966.5 1006.5h0M966.5 1007.5h0M967.5 1007.5h0M967.5 1006.5h0M968.5 1006.5h0M968.5 1007.5h0M969.5 1006.5h0M969.5 1006.5h0M970.5 1007.5h0M970.5 1006.5h0M971.5 1006.5h0M971.5 1006.5h0M972.5 1007.5h0M972.5 1006.5h0M973.5 1007.5h0M973.5 1006.5h0M974.5 1006.5h0M974.5 1006.5h0M975.5 1006.5h0M975.5 1006.5h0M976.5 1006.5h0M976.5 1006.5h0M977.5 1007.5h0M978.5 1007.5h0M978.5 1006.5h0M979.5 1006.5h0M979.5 1006.5h0M980.5 1007.5h0M980.5 1006.5h0M981.5 1007.5h0M981.5 1006.5h0M982.5 1006.5h0M982.5 1007.5h0M983.5 1007.5h0M983.5 1006.5h0M984.5 1006.5h0M984.5 1005.5h0M985.5 1008.5h0M985.5 1008.5h0M986.5 1008.5h0M986.5 1008.5h0M987.5 1008.5h0M987.5 1008.5h0M988.5 1008.5h0M988.5 1008.5h0M989.5 1008.5h0M989.5 1008.5h0M990.5 1008.5h0M991.5 1008.5h0M991.5 1008.5h0M992.5 1008.5h0M992.5 1008.5h0M993.5 1008.5h0M993.5 1008.5h0M994.5 1008.5h0M994.5 1008.5h0M995.5 1008.5h0M995.5 1008.5h0M996.5 1008.5h0M996.5 1008.5h0M997.5 1008.5h0M997.5 1008.5h0M998.5 1008.5h0M998.5 1008.5h0M999.5 1008.5h0M999.5 1008.5h0M1000.5 1007.5h0M1000.5 1008.5h0M1001.5 1008.5h0M1001.5 1008.5h0M1002.5 1008.5h0M1002.5 1008.5h0M1003.5 1008.5h0M1004.5 1008.5h0M1004.5 1008.5h0M1005.5 1008.5h0M1005.5 1008.5h0M1006.5 1008.5h0M1006.5 1008.5h0M1007.5 1008.5h0M1007.5 1008.5h0M1008.5 1007.5h0M1008.5 1008.5h0M1009.5 1008.5h0M1009.5 1008.5h0M1010.5 1008.5h0M1010.5 1007.5h0M1011.5 1008.5h0M1011.5 1008.5h0M1012.5 1008.5h0M1012.5 1008.5h0M1013.5 1008.5h0M1013.5 1007.5h0M1014.5 1008.5h0M1014.5 1008.5h0M1015.5 1007.5h0M1015.5 1007.5h0M1016.5 1007.5h0M1017.5 1008.5h0M1017.5 1008.5h0M1018.5 1008.5h0M1018.5 1007.5h0M1019.5 1008.5h0M1019.5 1008.5h0M1020.5 1008.5h0M1020.5 1008.5h0M1021.5 1008.5h0M1021.5 1008.5h0M1022.5 1008.5h0M1022.5 1007.5h0M1023.5 1008.5h0M1023.5 1007.5h0M1024.5 1008.5h0M1024.5 1008.5h0M1025.5 1008.5h0M1025.5 1007.5h0M1026.5 1008.5h0M1026.5 1007.5h0M1027.5 1008.5h0M1027.5 1008.5h0M1028.5 1007.5h0M1028.5 1008.5h0M1029.5 1007.5h0M1030.5 1008.5h0M1030.5 1008.5h0M1031.5 1008.5h0M1031.5 1008.5h0M1032.5 1008.5h0M1032.5 1008.5h0M1033.5 1008.5h0M1033.5 1008.5h0M1034.5 1008.5h0M1034.5 1008.5h0M1035.5 1007.5h0M1035.5 1007.5h0M1036.5 1008.5h0M1036.5 1008.5h0M1037.5 1008.5h0M1037.5 1008.5h0M1038.5 1007.5h0M1038.5 1007.5h0M1039.5 1008.5h0M1039.5 1007.5h0M1040.5 1007.5h0M1040.5 1008.5h0M1041.5 1008.5h0M1041.5 1008.5h0M1042.5 1008.5h0M1043.5 1008.5h0M1043.5 1008.5h0M1044.5 1008.5h0M1044.5 1007.5h0M1045.5 1007.5h0M1045.5 1005.5h0M1046.5 1005.5h0M1046.5 1006.5h0M1047.5 1006.5h0M1047.5 1006.5h0M1048.5 1006.5h0M1048.5 1007.5h0M1049.5 1006.5h0M1049.5 1006.5h0M1050.5 1006.5h0M1050.5 1006.5h0M1051.5 1006.5h0M1051.5 1006.5h0M1052.5 1007.5h0M1052.5 1006.5h0M1053.5 1006.5h0M1053.5 1006.5h0M1054.5 1006.5h0M1054.5 1006.5h0M1055.5 1006.5h0M1056.5 1006.5h0M1056.5 1006.5h0M1057.5 1006.5h0M1057.5 1006.5h0M1058.5 1006.5h0M1058.5 1006.5h0M1059.5 1007.5h0M1059.5 1006.5h0M1060.5 1006.5h0M1060.5 1006.5h0M1061.5 1006.5h0M1061.5 1006.5h0M1062.5 1006.5h0M1062.5 1006.5h0M1063.5 1006.5h0M1063.5 1007.5h0M1064.5 1006.5h0M1064.5 1006.5h0M1065.5 1006.5h0M1065.5 1006.5h0M1066.5 1006.5h0M1066.5 1006.5h0M1067.5 1006.5h0M1067.5 1006.5h0M1068.5 1006.5h0M1069.5 1006.5h0M1069.5 1006.5h0M1070.5 1006.5h0M1070.5 1006.5h0M1071.5 1006.5h0M1071.5 1006.5h0M1072.5 1006.5h0M1072.5 1007.5h0M1073.5 1007.5h0M1073.5 1007.5h0M1074.5 1007.5h0M1074.5 1007.5h0M1075.5 1007.5h0M1075.5 1007.5h0M1076.5 1008.5h0M1076.5 1007.5h0M1077.5 1007.5h0M1077.5 1007.5h0M1078.5 1006.5h0M1078.5 1008.5h0M1079.5 1007.5h0M1079.5 1007.5h0M1080.5 1007.5h0M1080.5 1007.5h0M1081.5 1007.5h0M1082.5 1007.5h0M1082.5 1007.5h0M1083.5 1007.5h0M1083.5 1007.5h0M1084.5 1007.5h0M1084.5 1007.5h0M1085.5 1007.5h0M1085.5 1007.5h0M1086.5 1007.5h0M1086.5 1007.5h0M1087.5 1008.5h0M1087.5 1008.5h0M1088.5 1007.5h0M1088.5 1007.5h0M1089.5 1007.5h0M1089.5 1007.5h0M1090.5 1007.5h0M1090.5 1007.5h0M1091.5 1007.5h0M1091.5 1007.5h0M1092.5 1007.5h0M1092.5 1007.5h0M1093.5 1007.5h0M1093.5 1007.5h0M1094.5 1007.5h0M1095.5 1006.5h0M1095.5 1007.5h0M1096.5 1007.5h0M1096.5 1007.5h0M1097.5 1008.5h0M1097.5 1007.5h0M1098.5 1007.5h0M1098.5 1007.5h0M1099.5 1007.5h0M1099.5 1008.5h0M1100.5 1007.5h0M1100.5 1007.5h0M1101.5 1007.5h0M1101.5 1007.5h0M1102.5 1007.5h0M1102.5 1007.5h0M1103.5 1007.5h0M1103.5 1007.5h0M1104.5 1007.5h0M1104.5 1007.5h0M1105.5 1007.5h0M1105.5 1007.5h0M1106.5 1007.5h0M1106.5 1008.5h0M1107.5 1008.5h0M1108.5 1007.5h0M1108.5 1007.5h0M1109.5 1007.5h0M1109.5 1007.5h0M1110.5 1007.5h0M1110.5 1007.5h0M1111.5 1007.5h0M1111.5 1006.5h0M1112.5 1007.5h0M1112.5 1007.5h0M1113.5 1006.5h0M1113.5 1007.5h0M1114.5 1007.5h0M1114.5 1007.5h0M1115.5 1007.5h0M1115.5 1007.5h0M1116.5 1008.5h0M1116.5 1008.5h0M1117.5 1007.5h0M1117.5 1007.5h0M1118.5 1008.5h0M1118.5 1007.5h0M1119.5 1007.5h0M1119.5 1007.5h0M1120.5 1007.5h0M1121.5 1007.5h0M1121.5 1007.5h0M1122.5 1007.5h0M1122.5 1008.5h0M1123.5 1007.5h0M1123.5 1007.5h0M1124.5 1008.5h0M1124.5 1007.5h0M1125.5 1007.5h0M1125.5 1008.5h0M1126.5 1007.5h0M1126.5 1007.5h0M1127.5 1007.5h0M1127.5 1008.5h0M1128.5 1007.5h0M1128.5 1007.5h0M1129.5 1007.5h0M1129.5 1007.5h0M1130.5 1007.5h0M1130.5 1007.5h0M1131.5 1007.5h0M1131.5 1007.5h0M1132.5 1007.5h0M1132.5 1006.5h0M1133.5 1007.5h0M1134.5 1007.5h0M1134.5 1007.5h0M1135.5 1007.5h0M1135.5 1007.5h0M1136.5 1007.5h0M1136.5 1007.5h0M1137.5 1007.5h0M1137.5 1007.5h0M1138.5 1007.5h0M1138.5 1004.5h0M1139.5 1004.5h0M1139.5 1004.5h0M1140.5 1005.5h0M1140.5 1005.5h0M1141.5 1005.5h0M1141.5 1005.5h0M1142.5 1005.5h0M1142.5 1004.5h0M1143.5 1005.5h0M1143.5 1005.5h0M1144.5 1005.5h0M1144.5 1005.5h0M1145.5 1006.5h0M1145.5 1005.5h0M1146.5 1005.5h0M1147.5 1005.5h0M1147.5 1005.5h0M1148.5 1005.5h0M1148.5 1004.5h0M1149.5 1005.5h0M1149.5 1005.5h0M1150.5 1005.5h0M1150.5 1005.5h0M1151.5 1005.5h0M1151.5 1005.5h0M1152.5 1005.5h0M1152.5 1005.5h0M1153.5 1005.5h0M1153.5 1005.5h0M1154.5 1005.5h0M1154.5 1005.5h0M1155.5 1005.5h0M1155.5 1005.5h0M1156.5 1005.5h0M1156.5 1005.5h0M1157.5 1005.5h0M1157.5 1005.5h0M1158.5 1005.5h0M1158.5 1005.5h0M1159.5 1005.5h0M1160.5 1005.5h0M1160.5 1005.5h0M1161.5 1005.5h0M1161.5 1004.5h0M1162.5 1004.5h0M1162.5 1008.5h0M1163.5 1008.5h0M1163.5 1008.5h0M1164.5 1008.5h0M1164.5 1008.5h0M1165.5 1007.5h0M1165.5 1007.5h0M1166.5 1007.5h0M1166.5 1008.5h0M1167.5 1008.5h0M1167.5 1008.5h0M1168.5 1008.5h0M1168.5 1008.5h0M1169.5 1008.5h0M1169.5 1008.5h0M1170.5 1007.5h0M1170.5 1008.5h0M1171.5 1007.5h0M1171.5 1007.5h0M1172.5 1007.5h0M1173.5 1007.5h0M1173.5 1007.5h0M1174.5 1008.5h0M1174.5 1007.5h0M1175.5 1007.5h0M1175.5 1008.5h0M1176.5 1007.5h0M1176.5 1008.5h0M1177.5 1008.5h0M1177.5 1007.5h0M1178.5 1007.5h0M1178.5 1008.5h0M1179.5 1007.5h0M1179.5 1008.5h0M1180.5 1007.5h0M1180.5 1008.5h0M1181.5 1007.5h0M1181.5 1007.5h0M1182.5 999.5h0M1182.5 1007.5h0M1183.5 1007.5h0M1183.5 1008.5h0M1184.5 1008.5h0M1184.5 1007.5h0M1185.5 1008.5h0M1186.5 1007.5h0M1186.5 1008.5h0M1187.5 1007.5h0M1187.5 1008.5h0M1188.5 1008.5h0M1188.5 1008.5h0M1189.5 1007.5h0M1189.5 1007.5h0M1190.5 1007.5h0M1190.5 1007.5h0M1191.5 1008.5h0M1191.5 1007.5h0M1192.5 1008.5h0M1192.5 1007.5h0M1193.5 1008.5h0M1193.5 1007.5h0M1194.5 1007.5h0M1194.5 1008.5h0M1195.5 1007.5h0M1195.5 1007.5h0M1196.5 1007.5h0M1196.5 1007.5h0M1197.5 1007.5h0M1197.5 1007.5h0M1198.5 1007.5h0M1199.5 1007.5h0M1199.5 1008.5h0M1200.5 1008.5h0M1200.5 1007.5h0M1201.5 1007.5h0M1201.5 1008.5h0M1202.5 1008.5h0M1202.5 1007.5h0M1203.5 1007.5h0M1203.5 1007.5h0M1204.5 1007.5h0M1204.5 1007.5h0M1205.5 1007.5h0M1205.5 1007.5h0M1206.5 1007.5h0M1206.5 1007.5h0M1207.5 1008.5h0M1207.5 1007.5h0M1208.5 1007.5h0M1208.5 1008.5h0M1209.5 1007.5h0M1209.5 1007.5h0M1210.5 1007.5h0M1210.5 1007.5h0M1211.5 1007.5h0M1212.5 1007.5h0M1212.5 1007.5h0M1213.5 1007.5h0M1213.5 1007.5h0M1214.5 1007.5h0M1214.5 1007.5h0M1215.5 1007.5h0M1215.5 1008.5h0M1216.5 1007.5h0M1216.5 1007.5h0M1217.5 1007.5h0M1217.5 1007.5h0M1218.5 1007.5h0M1218.5 1007.5h0M1219.5 1007.5h0M1219.5 1007.5h0M1220.5 1007.5h0M1220.5 1006.5h0M1221.5 1007.5h0M1221.5 1007.5h0M1222.5 1007.5h0M1222.5 1007.5h0M1223.5 1007.5h0M1223.5 1007.5h0M1224.5 1007.5h0M1225.5 1007.5h0M1225.5 1005.5h0M1226.5 1005.5h0M1226.5 1006.5h0M1227.5 1006.5h0M1227.5 1006.5h0M1228.5 1007.5h0M1228.5 1006.5h0M1229.5 1007.5h0M1229.5 1007.5h0M1230.5 1006.5h0M1230.5 1006.5h0M1231.5 1006.5h0M1231.5 1007.5h0M1232.5 1006.5h0M1232.5 1006.5h0M1233.5 1007.5h0M1233.5 1006.5h0M1234.5 1006.5h0M1234.5 1006.5h0M1235.5 1006.5h0M1235.5 1006.5h0M1236.5 1006.5h0M1236.5 1007.5h0M1237.5 1007.5h0M1238.5 1006.5h0M1238.5 1006.5h0M1239.5 1006.5h0M1239.5 1006.5h0M1240.5 1007.5h0M1240.5 1006.5h0M1241.5 1006.5h0M1241.5 1006.5h0M1242.5 1007.5h0M1242.5 1006.5h0M1243.5 1006.5h0M1243.5 1007.5h0M1244.5 1006.5h0M1244.5 1006.5h0M1245.5 1006.5h0M1245.5 1006.5h0M1246.5 1007.5h0M1246.5 1007.5h0M1247.5 1006.5h0M1247.5 1006.5h0M1248.5 1006.5h0M1248.5 1007.5h0M1249.5 1007.5h0M1249.5 1007.5h0M1250.5 1006.5h0M1251.5 1006.5h0M1251.5 1005.5h0M1252.5 1006.5h0M1252.5 1008.5h0M1253.5 1008.5h0M1253.5 1008.5h0M1254.5 1008.5h0M1254.5 1008.5h0M1255.5 1008.5h0M1255.5 1008.5h0M1256.5 1007.5h0M1256.5 1008.5h0M1257.5 1008.5h0M1257.5 1008.5h0M1258.5 1008.5h0M1258.5 1007.5h0M1259.5 1008.5h0M1259.5 1008.5h0M1260.5 1008.5h0M1260.5 1007.5h0M1261.5 1007.5h0M1261.5 1008.5h0M1262.5 1008.5h0M1262.5 1008.5h0M1263.5 1007.5h0M1264.5 1008.5h0M1264.5 1008.5h0M1265.5 1008.5h0M1265.5 1007.5h0M1266.5 1008.5h0M1266.5 1008.5h0M1267.5 1007.5h0M1267.5 1008.5h0M1268.5 1007.5h0M1268.5 1007.5h0M1269.5 1008.5h0M1269.5 1008.5h0M1270.5 1007.5h0M1270.5 1008.5h0M1271.5 1007.5h0M1271.5 1008.5h0M1272.5 1007.5h0M1272.5 1007.5h0M1273.5 1007.5h0M1273.5 1008.5h0M1274.5 1007.5h0M1274.5 1008.5h0M1275.5 1007.5h0M1275.5 1007.5h0M1276.5 1007.5h0M1277.5 1007.5h0M1277.5 1008.5h0M1278.5 1007.5h0M1278.5 1007.5h0M1279.5 1007.5h0M1279.5 1008.5h0M1280.5 1007.5h0M1280.5 1007.5h0M1281.5 1007.5h0M1281.5 1007.5h0M1282.5 1007.5h0M1282.5 1007.5h0M1283.5 1007.5h0M1283.5 1008.5h0M1284.5 1007.5h0M1284.5 1007.5h0M1285.5 1007.5h0M1285.5 1007.5h0M1286.5 1008.5h0M1286.5 1007.5h0M1287.5 1007.5h0M1287.5 1007.5h0M1288.5 1008.5h0M1288.5 1008.5h0M1289.5 1007.5h0M1290.5 1007.5h0M1290.5 1007.5h0M1291.5 1007.5h0M1291.5 1007.5h0M1292.5 1007.5h0M1292.5 1007.5h0M1293.5 1007.5h0M1293.5 1007.5h0M1294.5 1007.5h0M1294.5 1007.5h0M1295.5 1007.5h0M1295.5 1007.5h0M1296.5 1007.5h0M1296.5 1008.5h0M1297.5 1007.5h0M1297.5 1007.5h0M1298.5 1007.5h0M1298.5 1007.5h0M1299.5 1007.5h0M1299.5 1006.5h0M1300.5 1007.5h0M1300.5 1007.5h0M1301.5 1007.5h0M1301.5 1007.5h0M1302.5 1007.5h0" fill="none" stroke="#000" stroke-width="2.9" stroke-linecap="round"/>
<path d="M1303.5 956.52 L1302.52 958.48 L1304.48 958.48 Z" fill="#f00" stroke="#f00" stroke-width="1.39" stroke-linejoin="miter"/>
<path d="M162 1010.88V954.09" stroke="#800080" stroke-width="2.08" stroke-dasharray="2.08 3.44" fill="none"/>
<path d="M1303 1010.88V954.09" stroke="#800080" stroke-width="2.08" stroke-dasharray="2.08 3.44" fill="none"/>
</g>
<rect x="105.5" y="954.5" width="1380" height="57" fill="none" stroke="#000" stroke-width="1.11" stroke-linejoin="miter"/>
<path d="M162.5 1011.5v4.86M422.5 1011.5v4.86M682.5 1011.5v4.86M942.5 1011.5v4.86M1202.5 1011.5v4.86M1462.5 1011.5v4.86M105.5 1009.5h-4.86M105.5 983.5h-4.86M105.5 957.5h-4.86" stroke="#000" stroke-width="1.11" fill="none"/>
<path d="M105.5 996.5h-2.78M105.5 970.5h-2.78" stroke="#000" stroke-width="0.83" fill="none"/>
<rect x="1348.5" y="247.5" width="130" height="67" rx="2.78" ry="2.78" fill="#fff" stroke="#ccc" stroke-width="1.39" opacity="0.8"/>
<path d="M1367.5 260.5h0" fill="none" stroke="#ff0000" stroke-width="3.7" stroke-linecap="round"/>
<path d="M1367.5 281.5h0" fill="none" stroke="#ffa500" stroke-width="3.7" stroke-linecap="round"/>
<path d="M1367.5 302.5h0" fill="none" stroke="#000000" stroke-width="3.7" stroke-linecap="round"/>
<rect x="1361.5" y="42.5" width="117" height="27" rx="2.78" ry="2.78" fill="#fff" stroke="#ccc" stroke-width="1.39" opacity="0.8"/>
<path d="M1365.96 54H1396.04" stroke="#008000" stroke-width="2.08" fill="none"/>
<rect x="1348.5" y="613.5" width="130" height="46" rx="2.78" ry="2.78" fill="#fff" stroke="#ccc" stroke-width="1.39" opacity="0.8"/>
<path d="M1367.5 626.5h0" fill="none" stroke="#ffa500" stroke-width="3.7" stroke-linecap="round"/>
<path d="M1367.5 647.5h0" fill="none" stroke="#000000" stroke-width="3.7" stroke-linecap="round"/>
<rect x="1365.5" y="387.5" width="113" height="48" rx="2.78" ry="2.78" fill="#fff" stroke="#ccc" stroke-width="1.39" opacity="0.8"/>
<path d="M1369.11 399.5H1399.89" stroke="#ffa500" stroke-width="2.78" fill="none"/>
<path d="M1368.96 422H1399.04" stroke="#ff0000" stroke-width="2.08" fill="none"/>
<text class="t10" x="162.12" y="342" text-anchor="middle">0</text>
<text class="t10" x="422.13" y="342" text-anchor="middle">500</text>
<text class="t10" x="682.14" y="342" text-anchor="middle">1000</text>
<text class="t10" x="942.16" y="342" text-anchor="middle">1500</text>
<text class="t10" x="1202.17" y="342" text-anchor="middle">2000</text>
<text class="t10" x="1462.18" y="342" text-anchor="middle">2500</text>
<text class="t10" x="95.37" y="273.5" text-anchor="end">7.60</text>
<text class="t10" x="95.37" y="218.75" text-anchor="end">7.65</text>
<text class="t10" x="95.37" y="164" text-anchor="end">7.70</text>
<text class="t10" x="95.37" y="109.25" text-anchor="end">7.75</text>
<text class="t10" x="95.37" y="54.5" text-anchor="end">7.80</text>
<text class="t10" x="732.33" y="312.28" text-anchor="middle">52577</text>
<text class="t12" x="795.05" y="27" text-anchor="middle">AGASC ID 156238392</text>
<text class="t10" x="1392.38" y="263.89">not OK</text>
<text class="t10" x="1392.38" y="284.84">Highlighted</text>
<text class="t10" x="1392.38" y="305.78">OK</text>
<text class="t10" x="1405.77" y="58.67">mag<tspan class="sub" x="1436.73" y="60.97">AGASC</tspan></text>
<text class="t10" x="162.12" y="687" text-anchor="middle">0</text>
<text class="t10" x="422.13" y="687" text-anchor="middle">500</text>
<text class="t10" x="682.14" y="687" text-anchor="middle">1000</text>
<text class="t10" x="942.16" y="687" text-anchor="middle">1500</text>
<text class="t10" x="1202.17" y="687" text-anchor="middle">2000</text>
<text class="t10" x="1462.18" y="687" text-anchor="middle">2500</text>
<text class="t10" x="95.37" y="642.65" text-anchor="end">7.74</text>
<text class="t10" x="95.37" y="594.2" text-anchor="end">7.75</text>
<text class="t10" x="95.37" y="545.75" text-anchor="end">7.76</text>
<text class="t10" x="95.37" y="497.3" text-anchor="end">7.77</text>
<text class="t10" x="95.37" y="448.85" text-anchor="end">7.78</text>
<text class="t10" x="95.37" y="400.4" text-anchor="end">7.79</text>
<text class="t10" x="732.33" y="657.28" text-anchor="middle">52577</text>
<text class="t12" x="795.05" y="372" text-anchor="middle">Magnitude Estimates</text>
<text class="t10" x="1392.38" y="629.84">Highlighted</text>
<text class="t10" x="1392.38" y="650.78">OK</text>
<text class="t10" x="1409.15" y="403.67">mag<tspan class="sub" x="1440.11" y="405.97">OBSID</tspan></text>
<text class="t10" x="1409.15" y="426.77">mag</text>
<text class="t10" x="95.37" y="926.91" text-anchor="end">OBS not OK</text>
<text class="t10" x="95.37" y="894.23" text-anchor="end">dr &gt; 5</text>
<text class="t10" x="95.37" y="861.55" text-anchor="end">Ion. rad.</text>
<text class="t10" x="95.37" y="828.87" text-anchor="end">Sat. pixel.</text>
<text class="t10" x="95.37" y="796.19" text-anchor="end">not track</text>
<text class="t10" x="95.37" y="763.51" text-anchor="end">not Kalman</text>
<text class="t10" x="162.12" y="1032" text-anchor="middle">0</text>
<text class="t10" x="422.13" y="1032" text-anchor="middle">500</text>
<text class="t10" x="682.14" y="1032" text-anchor="middle">1000</text>
<text class="t10" x="942.16" y="1032" text-anchor="middle">1500</text>
<text class="t10" x="1202.17" y="1032" text-anchor="middle">2000</text>
<text class="t10" x="1462.18" y="1032" text-anchor="middle">2500</text>
<text class="t10" x="95.37" y="1014.18" text-anchor="end">0</text>
<text class="t10" x="95.37" y="988.18" text-anchor="end">5</text>
<text class="t10" x="95.37" y="962.19" text-anchor="end">10</text>
<text class="t10" x="69.19" y="990" transform="rotate(-90 69.19 990)">dr</text>
</svg>
</body></html>
